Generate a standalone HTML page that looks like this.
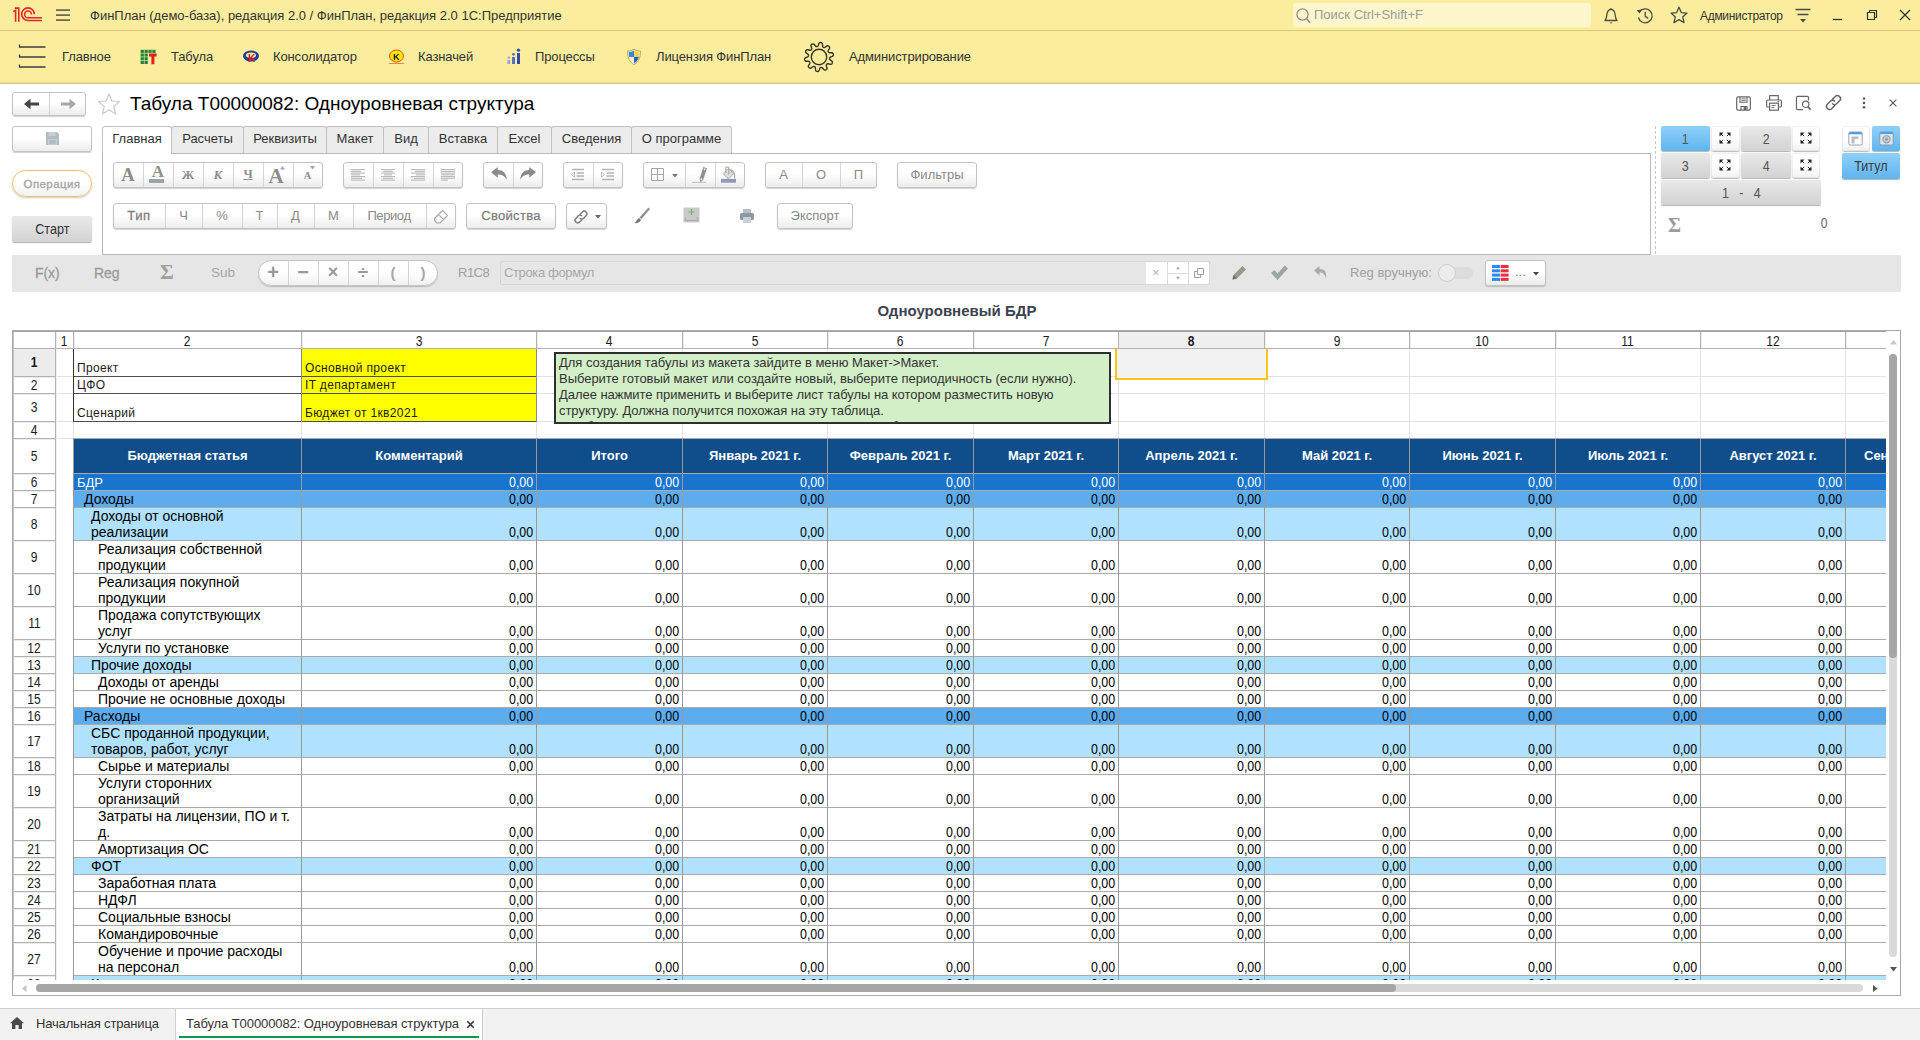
<!DOCTYPE html>
<html lang="ru"><head><meta charset="utf-8"><title>Табула T00000082: Одноуровневая структура</title>
<style>
*{box-sizing:border-box}
html,body{margin:0;padding:0}
body{width:1920px;height:1040px;overflow:hidden;background:#fff;font-family:"Liberation Sans",Arial,sans-serif;font-size:13px;color:#333;position:relative}
.abs{position:absolute}
#titlebar{left:0;top:0;width:1920px;height:31px;background:#fbed9e;border-bottom:1px solid #d9c97c}
#secbar{left:0;top:31px;width:1920px;height:53px;background:#fbed9e;border-bottom:1px solid #d6c98f;box-shadow:inset 0 -1px 0 #e9db8e}
.t{position:absolute;white-space:nowrap;line-height:16px}
.sec{font-size:13px;color:#333;top:49.4px;letter-spacing:-.12px}
.btn{position:absolute;border:1px solid #c3c3c3;border-radius:3px;background:linear-gradient(#fff,#fff 45%,#ececec);box-shadow:0 1px 1px rgba(0,0,0,.18)}
.gbtn{position:absolute;border-radius:2px;background:linear-gradient(#e9e9e9,#d2d2d2);box-shadow:0 1px 1px rgba(0,0,0,.3);text-align:center;color:#444}
.bbtn{position:absolute;border-radius:2px;background:linear-gradient(#8fd0fa,#5fb4f0);box-shadow:0 1px 1px rgba(0,0,0,.3);text-align:center;color:#333}
.sep{position:absolute;top:0;bottom:0;width:1px;background:#d4d4d4}
.lbl{position:absolute;top:0;height:100%;text-align:center;color:#8a8a8a;font-size:13px;line-height:24px}
.tab{position:absolute;top:126px;height:27px;border:1px solid #c0c0c0;border-bottom:none;background:#ececec;border-radius:3px 3px 0 0;font-size:13px;line-height:24px;text-align:center;color:#333}
.tab.act{background:#fff;height:28px;z-index:3}
/* grid */
#grid{left:12px;top:330px;width:1889px;height:666px;border:1px solid #a9a9a9;background:#fff;overflow:hidden}
.c{position:absolute;overflow:hidden;white-space:nowrap;font-size:13px;color:#000;line-height:15px}
.num{text-align:right;padding-right:3px}
.hd{position:absolute;text-align:center;font-size:13px;color:#000;line-height:16px}
.w{display:inline-block;transform-origin:0 0;transform:scaleX(1.0);font-size:14px;white-space:nowrap;line-height:16px;position:relative;top:-.4px}
.n{display:inline-block;transform-origin:100% 50%;transform:scaleX(.83);font-size:15px;line-height:16px;position:relative;top:-.3px}
.nc{display:inline-block;transform-origin:50% 50%;transform:scaleX(.83);font-size:14.5px;color:#1a1a1a;position:relative;top:-.4px}
</style></head>
<body>
<div id="titlebar" class="abs"></div>
<div id="secbar" class="abs"></div>
<!--TITLEBAR-->
<svg class="abs" style="left:10px;top:5px" width="34" height="20" viewBox="0 0 34 20"><g fill="none" stroke="#e3262c" stroke-width="1.6"><path d="M3.2 6.6 L5.6 5.4 V16.7 M4.8 3.1 H8.8 V16.7"/><path d="M31.9 15.5 H18 A6.3 6.3 0 1 1 24.3 9.2"/><path d="M31.9 12.8 H18 A3.4 3.4 0 1 1 21.4 9.4"/></g></svg>
<svg class="abs" style="left:55px;top:8px" width="16" height="14" viewBox="0 0 16 14"><g stroke="#70684f" stroke-width="1.7"><path d="M1 2.1H15M1 7.1H15M1 12.1H15"/></g></svg>
<div class="t" style="left:90px;top:8px;font-size:13px;color:#333">ФинПлан (демо-база), редакция 2.0 / ФинПлан, редакция 2.0 1С:Предприятие</div>
<div class="abs" style="left:1293px;top:3px;width:298px;height:24px;background:#fdf6cc;border-radius:3px"></div>
<svg class="abs" style="left:1295px;top:7px" width="18" height="18" viewBox="0 0 18 18"><circle cx="7.5" cy="7.5" r="5.6" fill="none" stroke="#8f8f8f" stroke-width="1.3"/><path d="M11.6 11.8 L15 15.6" stroke="#8f8f8f" stroke-width="1.6"/></svg>
<div class="t" style="left:1314px;top:7px;font-size:13px;color:#9b9b9b">Поиск Ctrl+Shift+F</div>
<svg class="abs" style="left:1602px;top:6px" width="18" height="20" viewBox="0 0 18 20"><path d="M3 14.5 C5 12.5 4.5 9 5.3 6.6 C6 4.4 7.5 3.4 9 3.4 C10.5 3.4 12 4.4 12.7 6.6 C13.5 9 13 12.5 15 14.5 Z" fill="none" stroke="#4a4a4a" stroke-width="1.3" stroke-linejoin="round"/><path d="M7.6 16.6 A1.5 1.5 0 0 0 10.4 16.6 Z" fill="#4a4a4a"/><path d="M9 3.4V2" stroke="#4a4a4a" stroke-width="1.3"/></svg>
<svg class="abs" style="left:1635px;top:5.5px" width="20" height="20" viewBox="0 0 20 20"><path d="M4.2 6.2 A7 7 0 1 1 3.4 11.5" fill="none" stroke="#4a4a4a" stroke-width="1.3"/><path d="M1.6 4.2 L4.6 7.4 L6.6 3.6 Z" fill="#4a4a4a"/><path d="M10.2 5.8 V10.4 L13.2 12.4" fill="none" stroke="#4a4a4a" stroke-width="1.3"/></svg>
<svg class="abs" style="left:1669px;top:5px" width="20" height="20" viewBox="0 0 20 20"><path d="M10 2.2 L12.3 7.6 L18 8.1 L13.7 11.9 L15 17.6 L10 14.6 L5 17.6 L6.3 11.9 L2 8.1 L7.7 7.6 Z" fill="none" stroke="#4a4a4a" stroke-width="1.3" stroke-linejoin="round"/></svg>
<div class="t" style="left:1700px;top:8px;font-size:12px;letter-spacing:-.3px;color:#333">Администратор</div>
<svg class="abs" style="left:1794px;top:7px" width="18" height="18" viewBox="0 0 18 18"><path d="M1.5 2.5H16.5M3.5 7.5H14.5" stroke="#4a4a4a" stroke-width="1.3"/><path d="M6 12 H12 L9 15.5 Z" fill="#4a4a4a"/></svg>
<svg class="abs" style="left:1832px;top:8px" width="12" height="14" viewBox="0 0 12 14"><path d="M1 11.5H10" stroke="#333" stroke-width="1.3"/></svg>
<svg class="abs" style="left:1865px;top:8px" width="14" height="14" viewBox="0 0 14 14"><path d="M2.5 4.5H9.5V11.5H2.5Z M4.5 4.5V2.5H11.5V9.5H9.5" fill="none" stroke="#333" stroke-width="1.2"/></svg>
<svg class="abs" style="left:1898px;top:8px" width="14" height="14" viewBox="0 0 14 14"><path d="M2 2L12 12M12 2L2 12" stroke="#333" stroke-width="1.3"/></svg>
<!--SECBAR-->
<div class="t sec" style="left:62px">Главное</div>
<div class="t sec" style="left:171px">Табула</div>
<div class="t sec" style="left:273px">Консолидатор</div>
<div class="t sec" style="left:418px">Казначей</div>
<div class="t sec" style="left:535px">Процессы</div>
<div class="t sec" style="left:656px">Лицензия ФинПлан</div>
<div class="t sec" style="left:849px">Администрирование</div>
<svg class="abs" style="left:17px;top:42px" width="30" height="28" viewBox="0 0 30 28"><g stroke="#3d3d3d" stroke-width="1.3" fill="none"><path d="M2.5 2.5V5H28.5M2.5 12.5V15H28.5M2.5 22.5V25H28.5"/></g></svg>
<svg class="abs" style="left:140px;top:49px" width="18" height="16" viewBox="0 0 18 16"><g fill="#23843f"><rect x="0.6" y="0.8" width="3.3" height="3.1"/><rect x="4.5" y="0.8" width="3.3" height="3.1"/><rect x="8.4" y="0.8" width="3.3" height="3.1"/><rect x="12.3" y="0.8" width="3.3" height="3.1"/><rect x="0.6" y="4.5" width="3.3" height="3.1"/><rect x="4.5" y="4.5" width="3.3" height="3.1"/><rect x="0.6" y="8.2" width="3.3" height="3.1"/><rect x="4.5" y="8.2" width="3.3" height="3.1"/><rect x="0.6" y="11.9" width="3.3" height="3.1"/><rect x="4.5" y="11.9" width="3.3" height="3.1"/></g><path d="M9 4.6H16.6V7.6H14.4V15.2H11.4V7.6H9Z" fill="#e3201b"/></svg>
<svg class="abs" style="left:242px;top:49px" width="18" height="16" viewBox="0 0 18 16"><ellipse cx="9" cy="7" rx="8" ry="5.5" fill="#1f3f9c"/><ellipse cx="9" cy="6.2" rx="5" ry="2.6" fill="#fbed9e"/><text x="6" y="13" font-family="Liberation Sans,sans-serif" font-weight="bold" font-size="10" fill="#e3201b">K</text></svg>
<svg class="abs" style="left:388px;top:49px" width="17" height="16" viewBox="0 0 17 16"><ellipse cx="8.5" cy="7" rx="7" ry="6" fill="#ffe600" stroke="#e84a1a" stroke-width="1"/><text x="5" y="10.5" font-family="Liberation Sans,sans-serif" font-weight="bold" font-size="9" fill="#222">K</text><path d="M1 14.5H16" stroke="#e88a3a" stroke-width="1"/></svg>
<svg class="abs" style="left:506px;top:48px" width="16" height="18" viewBox="0 0 16 18"><g fill="#2b4fa8"><rect x="11" y="5" width="3" height="11"/><circle cx="12.5" cy="2.2" r="1.6"/><rect x="6" y="9" width="3" height="7" fill="#5572c0"/><circle cx="7.5" cy="6.3" r="1.4" fill="#5572c0"/><rect x="1.5" y="12" width="2.6" height="4" fill="#8ea2dc"/><circle cx="2.8" cy="9.6" r="1.2" fill="#8ea2dc"/></g></svg>
<svg class="abs" style="left:626px;top:48px" width="16" height="18" viewBox="0 0 16 18"><path d="M8 1.2 C5.8 2.6 3.6 3 1.6 3 C1.4 9 3 13.8 8 16.6 C13 13.8 14.6 9 14.4 3 C12.4 3 10.2 2.6 8 1.2Z" fill="#f3f0dc" stroke="#c9a63a" stroke-width="1"/><path d="M8 2.4 C6.2 3.4 4.4 3.9 2.7 4 C2.7 5.8 2.8 7.4 3.2 9 H8Z" fill="#3d86dd"/><path d="M8 9 H12.8 C12 11.8 10.6 13.8 8 15.4Z" fill="#2b5fc4"/><path d="M8 2.4 C9.8 3.4 11.6 3.9 13.3 4 C13.3 5.8 13.2 7.4 12.8 9 H8Z" fill="#f3d35a"/></svg>
<svg class="abs" style="left:802px;top:40px" width="34" height="34" viewBox="0 0 34 34"><path d="M17.00 3.36 L17.37 2.85 L17.75 2.63 L18.14 2.55 L18.52 2.54 L18.90 2.58 L19.27 2.65 L19.64 2.77 L19.98 2.99 L20.27 3.40 L20.45 4.12 L20.52 5.10 L20.57 6.01 L20.69 6.59 L20.87 6.91 L21.09 7.11 L21.34 7.26 L21.59 7.39 L21.84 7.49 L22.12 7.57 L22.44 7.58 L22.86 7.44 L23.46 7.05 L24.25 6.46 L25.02 5.96 L25.61 5.77 L26.06 5.81 L26.42 5.97 L26.73 6.19 L27.02 6.45 L27.27 6.73 L27.49 7.04 L27.64 7.42 L27.64 7.92 L27.36 8.61 L26.84 9.45 L26.35 10.21 L26.11 10.74 L26.06 11.11 L26.12 11.41 L26.23 11.67 L26.36 11.92 L26.51 12.16 L26.69 12.38 L26.94 12.57 L27.36 12.71 L28.08 12.75 L29.06 12.73 L29.97 12.78 L30.57 12.98 L30.90 13.27 L31.10 13.62 L31.22 13.98 L31.31 14.35 L31.35 14.73 L31.34 15.11 L31.24 15.50 L30.94 15.90 L30.32 16.30 L29.40 16.68 L28.56 17.00 L28.04 17.29 L27.79 17.57 L27.67 17.84 L27.60 18.11 L27.56 18.39 L27.54 18.67 L27.55 18.96 L27.64 19.26 L27.90 19.62 L28.46 20.07 L29.27 20.63 L29.97 21.22 L30.34 21.72 L30.44 22.16 L30.40 22.55 L30.28 22.91 L30.13 23.26 L29.95 23.60 L29.71 23.90 L29.40 24.16 L28.93 24.31 L28.19 24.26 L27.22 24.03 L26.35 23.79 L25.77 23.73 L25.40 23.80 L25.14 23.95 L24.92 24.13 L24.73 24.33 L24.55 24.55 L24.39 24.78 L24.28 25.09 L24.28 25.53 L24.47 26.22 L24.79 27.15 L25.02 28.04 L25.02 28.66 L24.84 29.07 L24.58 29.36 L24.27 29.59 L23.94 29.79 L23.60 29.95 L23.23 30.06 L22.82 30.08 L22.35 29.92 L21.78 29.45 L21.14 28.69 L20.57 27.99 L20.14 27.59 L19.80 27.44 L19.50 27.40 L19.22 27.43 L18.94 27.47 L18.67 27.54 L18.40 27.64 L18.14 27.82 L17.88 28.18 L17.62 28.85 L17.33 29.79 L17.00 30.64 L16.63 31.15 L16.25 31.37 L15.86 31.45 L15.48 31.46 L15.10 31.42 L14.73 31.35 L14.36 31.23 L14.02 31.01 L13.73 30.60 L13.55 29.88 L13.48 28.90 L13.43 27.99 L13.31 27.41 L13.13 27.09 L12.91 26.89 L12.66 26.74 L12.41 26.61 L12.16 26.51 L11.88 26.43 L11.56 26.42 L11.14 26.56 L10.54 26.95 L9.75 27.54 L8.98 28.04 L8.39 28.23 L7.94 28.19 L7.58 28.03 L7.27 27.81 L6.98 27.55 L6.73 27.27 L6.51 26.96 L6.36 26.58 L6.36 26.08 L6.64 25.39 L7.16 24.55 L7.65 23.79 L7.89 23.26 L7.94 22.89 L7.88 22.59 L7.77 22.33 L7.64 22.08 L7.49 21.84 L7.31 21.62 L7.06 21.43 L6.64 21.29 L5.92 21.25 L4.94 21.27 L4.03 21.22 L3.43 21.02 L3.10 20.73 L2.90 20.38 L2.78 20.02 L2.69 19.65 L2.65 19.27 L2.66 18.89 L2.76 18.50 L3.06 18.10 L3.68 17.70 L4.60 17.32 L5.44 17.00 L5.96 16.71 L6.21 16.43 L6.33 16.16 L6.40 15.89 L6.44 15.61 L6.46 15.33 L6.45 15.04 L6.36 14.74 L6.10 14.38 L5.54 13.93 L4.73 13.37 L4.03 12.78 L3.66 12.28 L3.56 11.84 L3.60 11.45 L3.72 11.09 L3.87 10.74 L4.05 10.40 L4.29 10.10 L4.60 9.84 L5.07 9.69 L5.81 9.74 L6.78 9.97 L7.65 10.21 L8.23 10.27 L8.60 10.20 L8.86 10.05 L9.08 9.87 L9.27 9.67 L9.45 9.45 L9.61 9.22 L9.72 8.91 L9.72 8.47 L9.53 7.78 L9.21 6.85 L8.98 5.96 L8.98 5.34 L9.16 4.93 L9.42 4.64 L9.73 4.41 L10.06 4.21 L10.40 4.05 L10.77 3.94 L11.18 3.92 L11.65 4.08 L12.22 4.55 L12.86 5.31 L13.43 6.01 L13.86 6.41 L14.20 6.56 L14.50 6.60 L14.78 6.57 L15.06 6.53 L15.33 6.46 L15.60 6.36 L15.86 6.18 L16.12 5.82 L16.38 5.15 L16.67 4.21Z" fill="none" stroke="#38352a" stroke-width="1.4" stroke-linejoin="round"/><circle cx="17" cy="17" r="7.7" fill="none" stroke="#38352a" stroke-width="1.4"/></svg>
<!--FORMHEAD-->
<div class="btn" style="left:12px;top:92px;width:74px;height:24px"><div class="sep" style="left:36px"></div><svg class="abs" style="left:10px;top:5px" width="18" height="12" viewBox="0 0 18 12"><path d="M1 6 L7.5 0.8 V4.6 H16 V7.4 H7.5 V11.2 Z" fill="#444"/></svg><svg class="abs" style="left:46px;top:5px" width="18" height="12" viewBox="0 0 18 12"><path d="M17 6 L10.5 0.8 V4.6 H2 V7.4 H10.5 V11.2 Z" fill="#a8a8a8"/></svg></div>
<svg class="abs" style="left:96px;top:92px" width="26" height="24" viewBox="0 0 26 24"><path d="M13 1.8 L15.9 9 L23.6 9.5 L17.7 14.4 L19.6 21.9 L13 17.8 L6.4 21.9 L8.3 14.4 L2.4 9.5 L10.1 9 Z" fill="#fff" stroke="#c9c9c9" stroke-width="1.2" stroke-linejoin="round"/></svg>
<div class="t" style="left:130px;top:93px;font-size:19px;line-height:22px;color:#000">Табула T00000082: Одноуровневая структура</div>
<svg class="abs" style="left:1735px;top:95px" width="17" height="17" viewBox="0 0 17 17"><rect x="1.7" y="1.9" width="13.6" height="13.2" rx="1.6" fill="none" stroke="#666" stroke-width="1.2"/><path d="M5 2V7.3H12V2" fill="none" stroke="#666" stroke-width="1.1"/><path d="M6.4 3.9H10.6M6.4 5.6H10.6" stroke="#666" stroke-width=".9"/><path d="M6 15V11.5H12V15" fill="none" stroke="#666" stroke-width="1.1"/><rect x="8.6" y="12" width="2.8" height="3" fill="#666"/></svg>
<svg class="abs" style="left:1765px;top:94px" width="18" height="18" viewBox="0 0 18 18"><path d="M4.7 6V1.7H13.3V6" fill="none" stroke="#666" stroke-width="1.2"/><path d="M4.5 13H2.7Q1.6 13 1.6 11.9V7.2Q1.6 6 2.7 6H15.3Q16.4 6 16.4 7.2V11.9Q16.4 13 15.3 13H13.5" fill="none" stroke="#666" stroke-width="1.2"/><rect x="4.6" y="9.2" width="8.8" height="7" fill="#fff" stroke="#666" stroke-width="1.2"/><path d="M6.4 11.6H10.6M6.4 13.6H9.4" stroke="#666" stroke-width=".9"/><path d="M12.4 7.7H14.4" stroke="#666" stroke-width=".9"/></svg>
<svg class="abs" style="left:1795px;top:95px" width="17" height="16" viewBox="0 0 17 16"><path d="M13.5 5.5V2.5Q13.5 1.3 12.3 1.3H2.7Q1.5 1.3 1.5 2.5V13.5Q1.5 14.7 2.7 14.7H8" fill="none" stroke="#666" stroke-width="1.2"/><circle cx="10.7" cy="9.3" r="3.2" fill="none" stroke="#666" stroke-width="1.2"/><path d="M13 11.8 L15.6 14.6" stroke="#666" stroke-width="1.7"/></svg>
<svg class="abs" style="left:1824px;top:93px" width="19" height="19" viewBox="0 0 17 16"><g fill="none" stroke="#666" stroke-width="1.3" stroke-linecap="round"><path d="M7.5 5.2 L10 2.7 A2.6 2.6 0 0 1 14 6.5 L11.3 9.2 A2.6 2.6 0 0 1 7.6 9.2"/><path d="M9.5 10.8 L7 13.3 A2.6 2.6 0 0 1 3 9.5 L5.7 6.8 A2.6 2.6 0 0 1 9.4 6.8"/></g></svg>
<svg class="abs" style="left:1860.5px;top:96.3px" width="6" height="14" viewBox="0 0 6 14"><g fill="#555"><circle cx="3" cy="2.6" r="1.25"/><circle cx="3" cy="7" r="1.25"/><circle cx="3" cy="11.3" r="1.25"/></g></svg>
<svg class="abs" style="left:1888.4px;top:98.3px" width="10" height="10" viewBox="0 0 10 10"><path d="M1.6 1.6L8.4 8.4M8.4 1.6L1.6 8.4" stroke="#555" stroke-width="1.1"/></svg>
<div class="btn" style="left:12px;top:126px;width:80px;height:26px"><svg class="abs" style="left:32px;top:4px" width="15" height="15" viewBox="0 0 15 15"><path d="M1 1H12L14 3V14H1Z" fill="#b3bcc3"/><rect x="3.5" y="1" width="7" height="4" fill="#c9d0d5"/><rect x="3" y="8" width="9" height="6" fill="#c4ccd2"/><path d="M4.5 10H10.5M4.5 12H10.5" stroke="#a0a9b0" stroke-width="1"/></svg></div>
<div class="abs" style="left:12px;top:170px;width:80px;height:27px;border:1px solid #f1c26a;border-radius:14px;background:linear-gradient(#fff,#fff 50%,#f1f1f1);box-shadow:0 1px 2px rgba(0,0,0,.22);text-align:center;font-size:11.5px;letter-spacing:.4px;line-height:26px;color:#a3a3a3;-webkit-text-stroke:.3px #a3a3a3">Операция</div>
<div class="gbtn" style="left:12px;top:216px;width:80px;height:26px;line-height:26px;color:#333"><span class="nc" style="font-size:15px;transform:scaleX(.84);color:#333">Старт</span></div>
<div class="abs" style="left:102px;top:153px;width:1549px;height:102px;border:1px solid #b9b9b9;background:#fff"></div>
<div class="tab act" style="left:102px;width:70px">Главная</div>
<div class="tab" style="left:171px;width:73px">Расчеты</div>
<div class="tab" style="left:243px;width:84px">Реквизиты</div>
<div class="tab" style="left:326px;width:58px">Макет</div>
<div class="tab" style="left:383px;width:46px">Вид</div>
<div class="tab" style="left:428px;width:70px">Вставка</div>
<div class="tab" style="left:497px;width:55px">Excel</div>
<div class="tab" style="left:551px;width:81px">Сведения</div>
<div class="tab" style="left:631px;width:101px">О программе</div>
<div class="btn" style="left:113px;top:162px;width:210px;height:26px"><div class="sep" style="left:29px"></div><div class="sep" style="left:59px"></div><div class="sep" style="left:89px"></div><div class="sep" style="left:119px"></div><div class="sep" style="left:149px"></div><div class="sep" style="left:179px"></div><div class="lbl" style="left:-1px;width:30px;font-family:'Liberation Serif',serif;font-weight:bold;color:#8c8c8c;font-size:18.5px;line-height:25px">A</div><div class="lbl" style="left:29px;width:30px;font-family:'Liberation Serif',serif;font-weight:bold;color:#8c8c8c;font-size:17px;line-height:18px">A</div><div class="abs" style="left:35px;top:16px;width:15px;height:3.5px;background:#9aa4ad"></div><div class="lbl" style="left:59px;width:30px;font-family:'Liberation Serif',serif;font-weight:bold;color:#8c8c8c;font-size:12.5px;line-height:24px;text-transform:uppercase">ж</div><div class="lbl" style="left:89px;width:30px;font-family:'Liberation Serif',serif;font-weight:bold;color:#8c8c8c;font-style:italic;font-size:13px;line-height:24px;text-transform:uppercase">к</div><div class="lbl" style="left:119px;width:30px;font-family:'Liberation Serif',serif;font-weight:bold;color:#8c8c8c;font-size:12.5px;line-height:23px;text-transform:uppercase;text-decoration:underline">ч</div><div class="lbl" style="left:147px;width:30px;font-family:'Liberation Serif',serif;font-weight:bold;color:#8c8c8c;font-size:21px;line-height:27px">A</div><svg class="abs" style="left:166px;top:3px" width="5" height="4"><path d="M0 3.5L2.5 0L5 3.5Z" fill="#a3a3b0"/></svg><div class="lbl" style="left:179px;width:29px;font-family:'Liberation Serif',serif;font-weight:bold;color:#8c8c8c;font-size:10.5px;line-height:26px">A</div><svg class="abs" style="left:196px;top:3px" width="5" height="4"><path d="M0 0H5L2.5 3.5Z" fill="#a3a3b0"/></svg></div>
<div class="btn" style="left:343px;top:162px;width:120px;height:26px"><div class="sep" style="left:29px"></div><div class="sep" style="left:59px"></div><div class="sep" style="left:89px"></div><svg class="abs" style="left:6px;top:5px" width="16" height="14" viewBox="0 0 16 14"><g stroke="#b4babf" stroke-width="1.1"><path d="M1.0 1.6H15.0"/><path d="M1.0 3.4H11.0"/><path d="M1.0 5.1H15.0"/><path d="M1.0 6.8H10.0"/><path d="M1.0 8.6H15.0"/><path d="M1.0 10.3H12.0"/><path d="M1.0 12.1H15.0"/></g></svg><svg class="abs" style="left:36px;top:5px" width="16" height="14" viewBox="0 0 16 14"><g stroke="#b4babf" stroke-width="1.1"><path d="M1.0 1.6H15.0"/><path d="M3.0 3.4H13.0"/><path d="M1.0 5.1H15.0"/><path d="M4.0 6.8H12.0"/><path d="M1.0 8.6H15.0"/><path d="M3.0 10.3H13.0"/><path d="M1.0 12.1H15.0"/></g></svg><svg class="abs" style="left:66px;top:5px" width="16" height="14" viewBox="0 0 16 14"><g stroke="#b4babf" stroke-width="1.1"><path d="M1.0 1.6H15.0"/><path d="M5.0 3.4H15.0"/><path d="M1.0 5.1H15.0"/><path d="M6.0 6.8H15.0"/><path d="M1.0 8.6H15.0"/><path d="M4.0 10.3H15.0"/><path d="M1.0 12.1H15.0"/></g></svg><svg class="abs" style="left:96px;top:5px" width="16" height="14" viewBox="0 0 16 14"><g stroke="#b4babf" stroke-width="1.1"><path d="M1.0 1.6H15.0"/><path d="M1.0 3.4H15.0"/><path d="M1.0 5.1H15.0"/><path d="M1.0 6.8H15.0"/><path d="M1.0 8.6H15.0"/><path d="M1.0 10.3H15.0"/><path d="M1.0 12.1H8.0"/></g></svg></div>
<div class="btn" style="left:483px;top:162px;width:60px;height:26px"><div class="sep" style="left:29px"></div><svg class="abs" style="left:6px;top:3px" width="18" height="15" viewBox="0 0 20 17"><path d="M1 7 L8.5 1 V4.6 C14.5 4.6 18.5 8.2 18.8 15.5 C16.6 11.4 13.6 9.6 8.5 9.6 V13.2 Z" fill="#8a8a8a"/></svg><svg class="abs" style="left:35px;top:3px" width="18" height="15" viewBox="0 0 20 17"><path d="M19 7 L11.5 1 V4.6 C5.5 4.6 1.5 8.2 1.2 15.5 C3.4 11.4 6.4 9.6 11.5 9.6 V13.2 Z" fill="#8a8a8a"/></svg></div>
<div class="btn" style="left:563px;top:162px;width:60px;height:26px"><div class="sep" style="left:29px"></div><svg class="abs" style="left:6px;top:5px" width="16" height="14" viewBox="0 0 16 14"><g stroke="#aeb3b7" stroke-width="1.3"><path d="M2 1.5H14M6.5 5H14M6.5 8H14M2 11.5H14"/></g><path d="M1.5 6.5L4.5 4V9Z" fill="none" stroke="#aeb3b7" stroke-width=".9"/></svg><svg class="abs" style="left:36px;top:5px" width="16" height="14" viewBox="0 0 16 14"><g stroke="#aeb3b7" stroke-width="1.3"><path d="M2 1.5H14M6.5 5H14M6.5 8H14M2 11.5H14"/></g><path d="M4.5 6.5L1.5 4V9Z" fill="none" stroke="#aeb3b7" stroke-width=".9"/></svg></div>
<div class="btn" style="left:643px;top:162px;width:102px;height:26px"><div class="sep" style="left:41px"></div><div class="sep" style="left:71px"></div><svg class="abs" style="left:6px;top:4px" width="15" height="15" viewBox="0 0 15 15"><path d="M1.5 1.5H13.5V13.5H1.5ZM7.5 1.5V13.5M1.5 7.5H13.5" fill="none" stroke="#a6a6a6" stroke-width="1"/></svg><svg class="abs" style="left:28px;top:11px" width="7" height="4"><path d="M0 0H6L3 3.5Z" fill="#777"/></svg><svg class="abs" style="left:48px;top:3px" width="16" height="18" viewBox="0 0 16 18"><path d="M11.3 1 L15 2.2 L11.1 14 L8.3 16.2 L7.6 12.9 Z" fill="#8a9094"/><circle cx="12.6" cy="3.2" r="1" fill="#e8e8e8"/><circle cx="9.4" cy="13.2" r="1" fill="#e8e8e8"/><path d="M0 16.4H14" stroke="#c2c2c2" stroke-width="1.1"/></svg><svg class="abs" style="left:77px;top:3px" width="16" height="18" viewBox="0 0 16 18"><path d="M7.4 2.4 L12.7 7.7 L7.4 13 L2.1 7.7 Z" fill="#dcdcdc" stroke="#ababab" stroke-width="1"/><path d="M4.8 7 V1.2 H7.8 V8.2" fill="none" stroke="#9aa890" stroke-width="1"/><path d="M9.5 3.6 C12.4 4.4 14.2 6.4 13.6 12.6" fill="none" stroke="#a8ad95" stroke-width="1.1"/><rect x="0" y="12.9" width="15" height="3.8" fill="#8f9ab8"/></svg></div>
<div class="btn" style="left:765px;top:162px;width:112px;height:26px"><div class="sep" style="left:36px"></div><div class="sep" style="left:74px"></div><div class="lbl" style="left:-1px;width:37px;">A</div><div class="lbl" style="left:36px;width:38px;">О</div><div class="lbl" style="left:74px;width:37px;">П</div></div>
<div class="btn" style="left:897px;top:162px;width:80px;height:26px"><div class="lbl" style="left:-1px;width:80px;">Фильтры</div></div>
<div class="btn" style="left:113px;top:203px;width:343px;height:26px"><div class="sep" style="left:51px"></div><div class="sep" style="left:88px"></div><div class="sep" style="left:128px"></div><div class="sep" style="left:163px"></div><div class="sep" style="left:200px"></div><div class="sep" style="left:239px"></div><div class="sep" style="left:312px"></div><div class="lbl" style="left:-1px;width:52px;color:#7d7d7d;-webkit-text-stroke:.3px #7d7d7d;letter-spacing:.6px">Тип</div><div class="lbl" style="left:51px;width:37px;">Ч</div><div class="lbl" style="left:88px;width:40px;">%</div><div class="lbl" style="left:128px;width:35px;">Т</div><div class="lbl" style="left:163px;width:37px;">Д</div><div class="lbl" style="left:200px;width:39px;">М</div><div class="lbl" style="left:239px;width:72px;letter-spacing:-.4px">Период</div><svg class="abs" style="left:318px;top:4px" width="18" height="18" viewBox="0 0 18 18"><path d="M10.5 2.5 L15.5 7.5 L8 15 L5 15 L2.5 12.5 L2.5 10.5 Z M6.5 6.5 L11.5 11.5" fill="none" stroke="#a8a8a8" stroke-width="1.1" stroke-linejoin="round"/></svg></div>
<div class="btn" style="left:466px;top:203px;width:90px;height:26px"><div class="lbl" style="left:-1px;width:90px;color:#7d7d7d;-webkit-text-stroke:.25px #7d7d7d;letter-spacing:.3px">Свойства</div></div>
<div class="btn" style="left:566px;top:203px;width:41px;height:26px"><svg class="abs" style="left:6px;top:5px" width="16" height="16" viewBox="0 0 17 16"><g fill="none" stroke="#7a7a7a" stroke-width="1.5" stroke-linecap="round"><path d="M7.5 5.2 L10 2.7 A2.6 2.6 0 0 1 14 6.5 L11.3 9.2 A2.6 2.6 0 0 1 7.6 9.2"/><path d="M9.5 10.8 L7 13.3 A2.6 2.6 0 0 1 3 9.5 L5.7 6.8 A2.6 2.6 0 0 1 9.4 6.8"/></g></svg><svg class="abs" style="left:28px;top:11px" width="7" height="4"><path d="M0 0H6L3 3.5Z" fill="#666"/></svg></div>
<svg class="abs" style="left:633px;top:206px" width="18" height="20" viewBox="0 0 18 20"><path d="M15.5 1.5 L17 3 L8.5 13 L6.5 11.5 Z" fill="#8f8f8f"/><path d="M6 12 L8 13.8 C7 16.5 4 17.6 1.5 17 C3.5 15.8 3.6 13.4 6 12Z" fill="#777"/></svg>
<svg class="abs" style="left:683px;top:207px" width="17" height="17" viewBox="0 0 17 17"><rect x="0.5" y="0.5" width="16" height="15" fill="#c9c9c9"/><path d="M8.5 2V8M5.5 5H11.5" stroke="#7fae6f" stroke-width="1.2"/><path d="M2.5 10.5V13.5H14.5V10.5" fill="none" stroke="#a9a9a9" stroke-width="1.2"/></svg>
<svg class="abs" style="left:739px;top:208px" width="16" height="16" viewBox="0 0 16 16"><rect x="4" y="1" width="8" height="5" fill="#b8c0c7"/><rect x="1" y="5" width="14" height="7" rx="1.5" fill="#8b98a3"/><rect x="4" y="9" width="8" height="6" fill="#c9d0d6"/></svg>
<div class="btn" style="left:777px;top:203px;width:76px;height:26px"><div class="lbl" style="left:-1px;width:76px;">Экспорт</div></div>
<div class="abs" style="left:1655px;top:126px;width:0;height:128px;border-left:1px dashed #c9c9c9"></div>
<div class="bbtn" style="left:1661px;top:126px;width:49px;height:25px;line-height:25px;color:#555"><span class="nc" style="font-size:15px;color:#555">1</span></div>
<div class="abs" style="left:1711px;top:126px;width:29px;height:25px;background:linear-gradient(#fff,#fff 50%,#f1f1f1);border-radius:3px;box-shadow:0 1px 1px rgba(0,0,0,.28),0 0 0 1px rgba(0,0,0,.06) inset"><svg class="abs" style="left:8px;top:6px" width="12" height="12" viewBox="0 0 12 12"><g fill="#222"><path d="M0.5 0.5H4.5L0.5 4.5Z M11.5 0.5V4.5L7.5 0.5Z M0.5 11.5V7.5L4.5 11.5Z M11.5 11.5H7.5L11.5 7.5Z"/></g><g stroke="#222" stroke-width="1"><path d="M1.5 1.5L4.2 4.2M10.5 1.5L7.8 4.2M1.5 10.5L4.2 7.8M10.5 10.5L7.8 7.8"/></g></svg></div>
<div class="gbtn" style="left:1741px;top:126px;width:50px;height:25px;line-height:25px;color:#555"><span class="nc" style="font-size:15px;color:#555">2</span></div>
<div class="abs" style="left:1792px;top:126px;width:28px;height:25px;background:linear-gradient(#fff,#fff 50%,#f1f1f1);border-radius:3px;box-shadow:0 1px 1px rgba(0,0,0,.28),0 0 0 1px rgba(0,0,0,.06) inset"><svg class="abs" style="left:8px;top:6px" width="12" height="12" viewBox="0 0 12 12"><g fill="#222"><path d="M0.5 0.5H4.5L0.5 4.5Z M11.5 0.5V4.5L7.5 0.5Z M0.5 11.5V7.5L4.5 11.5Z M11.5 11.5H7.5L11.5 7.5Z"/></g><g stroke="#222" stroke-width="1"><path d="M1.5 1.5L4.2 4.2M10.5 1.5L7.8 4.2M1.5 10.5L4.2 7.8M10.5 10.5L7.8 7.8"/></g></svg></div>
<div class="gbtn" style="left:1661px;top:153px;width:49px;height:25px;line-height:25px;color:#555"><span class="nc" style="font-size:15px;color:#555">3</span></div>
<div class="abs" style="left:1711px;top:153px;width:29px;height:25px;background:linear-gradient(#fff,#fff 50%,#f1f1f1);border-radius:3px;box-shadow:0 1px 1px rgba(0,0,0,.28),0 0 0 1px rgba(0,0,0,.06) inset"><svg class="abs" style="left:8px;top:6px" width="12" height="12" viewBox="0 0 12 12"><g fill="#222"><path d="M0.5 0.5H4.5L0.5 4.5Z M11.5 0.5V4.5L7.5 0.5Z M0.5 11.5V7.5L4.5 11.5Z M11.5 11.5H7.5L11.5 7.5Z"/></g><g stroke="#222" stroke-width="1"><path d="M1.5 1.5L4.2 4.2M10.5 1.5L7.8 4.2M1.5 10.5L4.2 7.8M10.5 10.5L7.8 7.8"/></g></svg></div>
<div class="gbtn" style="left:1741px;top:153px;width:50px;height:25px;line-height:25px;color:#555"><span class="nc" style="font-size:15px;color:#555">4</span></div>
<div class="abs" style="left:1792px;top:153px;width:28px;height:25px;background:linear-gradient(#fff,#fff 50%,#f1f1f1);border-radius:3px;box-shadow:0 1px 1px rgba(0,0,0,.28),0 0 0 1px rgba(0,0,0,.06) inset"><svg class="abs" style="left:8px;top:6px" width="12" height="12" viewBox="0 0 12 12"><g fill="#222"><path d="M0.5 0.5H4.5L0.5 4.5Z M11.5 0.5V4.5L7.5 0.5Z M0.5 11.5V7.5L4.5 11.5Z M11.5 11.5H7.5L11.5 7.5Z"/></g><g stroke="#222" stroke-width="1"><path d="M1.5 1.5L4.2 4.2M10.5 1.5L7.8 4.2M1.5 10.5L4.2 7.8M10.5 10.5L7.8 7.8"/></g></svg></div>
<div class="gbtn" style="left:1661px;top:180px;width:160px;height:25px;line-height:25px;color:#555"><span class="nc" style="font-size:15px;color:#555">1&nbsp;&nbsp; -&nbsp;&nbsp; 4</span></div>
<div class="t" style="left:1668px;top:213px;font-family:'Liberation Serif',serif;font-size:20px;font-weight:bold;line-height:24px;color:#9a9a9a">Σ</div>
<div class="t" style="left:1820px;top:215px;color:#666"><span class="nc" style="font-size:14.5px;color:#666">0</span></div>
<div class="abs" style="left:1842px;top:126px;width:28px;height:25px;background:linear-gradient(#fff,#fff 50%,#f1f1f1);border-radius:3px;box-shadow:0 1px 1px rgba(0,0,0,.28),0 0 0 1px rgba(0,0,0,.06) inset"><svg class="abs" style="left:6px;top:5px" width="15" height="15" viewBox="0 0 15 15"><rect x="0.8" y="1" width="13.4" height="13" rx="1.5" fill="#fdfdfd" stroke="#9aa3ab" stroke-width="1"/><path d="M0.8 3.2 V2.5 Q0.8 1 2.3 1 H12.7 Q14.2 1 14.2 2.5 V3.2Z" fill="#4c9ff0"/><path d="M3.5 5.5H10.5V8H6.5V12.5H3.5Z" fill="#b9bec3"/></svg></div>
<div class="bbtn" style="left:1872px;top:126px;width:28px;height:25px"><svg class="abs" style="left:7px;top:5px" width="15" height="15" viewBox="0 0 15 15"><rect x="0.8" y="1" width="13.4" height="13" rx="1.5" fill="#dbe4ea" stroke="#8e9aa5" stroke-width="1"/><path d="M0.8 3 V2.5 Q0.8 1 2.3 1 H12.7 Q14.2 1 14.2 2.5 V3Z" fill="#4c9ff0"/><circle cx="7.5" cy="8.3" r="3.6" fill="#c3ccd3" stroke="#97a3ad" stroke-width="1.1"/><circle cx="7.5" cy="8.3" r="1.3" fill="#8d99a4"/></svg></div>
<div class="bbtn" style="left:1842px;top:153px;width:58px;height:26px;line-height:26px"><span class="nc" style="font-size:15px;transform:scaleX(.84);color:#3c3c3c">Титул</span></div>
<div class="abs" style="left:12px;top:255px;width:1889px;height:37px;background:#e6e6e6"></div>
<div class="t" style="left:35px;top:265px;color:#9a9a9a;font-size:14px;letter-spacing:-.1px;-webkit-text-stroke:.3px #9a9a9a">F(x)</div>
<div class="t" style="left:94px;top:265px;color:#9a9a9a;font-size:14px;letter-spacing:-.1px;-webkit-text-stroke:.3px #9a9a9a">Reg</div>
<div class="t" style="left:160px;top:260px;font-family:'Liberation Serif',serif;font-weight:bold;font-size:21px;line-height:24px;color:#a0a0a0">Σ</div>
<div class="t" style="left:211px;top:265px;color:#a5a5a5;font-size:13.5px">Sub</div>
<div class="abs" style="left:258px;top:260px;width:180px;height:26px;border:1px solid #c6c6c6;border-radius:13px;background:linear-gradient(#fff,#fff 50%,#f0f0f0);box-shadow:0 1px 1px rgba(0,0,0,.2)"><div class="sep" style="left:29px"></div><div class="sep" style="left:59px"></div><div class="sep" style="left:89px"></div><div class="sep" style="left:119px"></div><div class="sep" style="left:149px"></div><div class="lbl" style="left:-1px;width:30px;font-size:20px;line-height:23px;color:#999;font-weight:bold;">+</div><div class="lbl" style="left:29px;width:30px;font-size:20px;line-height:23px;color:#999;font-weight:bold;">−</div><div class="lbl" style="left:59px;width:30px;font-size:18px;line-height:23px;color:#999;font-weight:bold;">×</div><div class="lbl" style="left:89px;width:30px;font-size:19px;line-height:23px;color:#999;font-weight:bold;">÷</div><div class="lbl" style="left:119px;width:30px;font-size:15px;line-height:23px;color:#999;font-weight:bold;color:#a6a6a6;">(</div><div class="lbl" style="left:149px;width:30px;font-size:15px;line-height:23px;color:#999;font-weight:bold;color:#a6a6a6;">)</div></div>
<div class="t" style="left:458px;top:265px;font-size:13px;color:#a0a0a0;letter-spacing:-.5px">R1C8</div>
<div class="abs" style="left:500px;top:261px;width:710px;height:24px;border:1px solid #d6d6d6;border-radius:2px;background:#e6e6e6"></div>
<div class="t" style="left:504px;top:265px;font-size:13px;letter-spacing:-.36px;color:#a8a8a8">Строка формул</div>
<div class="abs" style="left:1146px;top:262px;width:63px;height:22px;background:#fff;border-radius:0 2px 2px 0"></div>
<div class="abs" style="left:1167px;top:262px;width:1px;height:22px;background:#dcdcdc"></div><div class="abs" style="left:1188px;top:262px;width:1px;height:22px;background:#dcdcdc"></div><div class="abs" style="left:1168px;top:273px;width:20px;height:1px;background:#dcdcdc"></div>
<div class="t" style="left:1152px;top:265px;font-size:13px;color:#b4b4b4">×</div>
<svg class="abs" style="left:1175px;top:265px" width="6" height="16" viewBox="0 0 6 16"><path d="M1 4.2L3 1.6L5 4.2Z M1 11.8L3 14.4L5 11.8Z" fill="#a8a8a8"/></svg>
<svg class="abs" style="left:1194px;top:268px" width="10" height="10" viewBox="0 0 10 10"><path d="M3.5 0.5H9.5V6.5H3.5Z M0.5 3.5H3.5 M6.5 6.5V9.5H0.5V3.5" fill="none" stroke="#a0a0a0" stroke-width="1"/></svg>
<svg class="abs" style="left:1231px;top:264px" width="17" height="17" viewBox="0 0 17 17"><path d="M11.5 2 L15 5.5 L6 14.5 L1.5 15.5 L2.5 11 Z" fill="#9a9a8a"/><path d="M1.5 15.5 L2.5 11 L6 14.5Z" fill="#6f6f6f"/></svg>
<svg class="abs" style="left:1270px;top:264px" width="19" height="17" viewBox="0 0 19 17"><path d="M1 9 L4.5 6 L7.5 9.6 L14.8 1.6 L18 4.6 L7.5 16 Z" fill="#9aa79a"/></svg>
<svg class="abs" style="left:1313px;top:265px" width="16" height="16" viewBox="0 0 16 16"><path d="M1 5.5 L6.5 1 V4 C11.5 4 14 7 13 13.5 C12 10 10.5 7.5 6.5 7.5 V10.5 Z" fill="#a9aab2"/></svg>
<div class="t" style="left:1350px;top:265px;font-size:13px;color:#a0a0a0">Reg вручную:</div>
<div class="abs" style="left:1443px;top:267px;width:30px;height:12px;border-radius:6px;background:#dcdcdc"></div><div class="abs" style="left:1438px;top:264px;width:18px;height:18px;border-radius:9px;background:#ececec;border:1px solid #cdcdcd"></div>
<div class="btn" style="left:1485px;top:260px;width:61px;height:26px"><svg class="abs" style="left:6px;top:4px" width="17" height="16" viewBox="0 0 17 16"><g fill="#2a8af0"><rect x="0" y="0" width="8" height="3"/><rect x="0" y="4.3" width="8" height="3"/><rect x="0" y="8.6" width="8" height="3"/><rect x="0" y="12.9" width="8" height="3"/></g><g fill="#e8323c"><rect x="8.6" y="0" width="8" height="3"/><rect x="8.6" y="4.3" width="8" height="3"/><rect x="8.6" y="8.6" width="8" height="3"/><rect x="8.6" y="12.9" width="8" height="3"/></g></svg><div class="abs" style="left:29px;top:3px;font-size:13px;color:#8a8a8a;line-height:16px">...</div><svg class="abs" style="left:47px;top:11px" width="7" height="4"><path d="M0 0H6L3 3.5Z" fill="#444"/></svg></div>
<div class="t" style="left:857px;top:302px;width:200px;text-align:center;font-weight:bold;font-size:15px;line-height:17px;color:#3b4250">Одноуровневый БДР</div>
<div id="grid" class="abs">
<div class="abs" id="cells" style="left:0;top:0;width:1873px;height:649px;overflow:hidden">
<div class="abs" style="left:60px;top:17px;width:1px;height:90px;background:#e2e2e2"></div>
<div class="abs" style="left:288px;top:17px;width:1px;height:90px;background:#e2e2e2"></div>
<div class="abs" style="left:523px;top:17px;width:1px;height:90px;background:#e2e2e2"></div>
<div class="abs" style="left:669px;top:17px;width:1px;height:90px;background:#e2e2e2"></div>
<div class="abs" style="left:814px;top:17px;width:1px;height:90px;background:#e2e2e2"></div>
<div class="abs" style="left:960px;top:17px;width:1px;height:90px;background:#e2e2e2"></div>
<div class="abs" style="left:1105px;top:17px;width:1px;height:90px;background:#e2e2e2"></div>
<div class="abs" style="left:1251px;top:17px;width:1px;height:90px;background:#e2e2e2"></div>
<div class="abs" style="left:1396px;top:17px;width:1px;height:90px;background:#e2e2e2"></div>
<div class="abs" style="left:1542px;top:17px;width:1px;height:90px;background:#e2e2e2"></div>
<div class="abs" style="left:1687px;top:17px;width:1px;height:90px;background:#e2e2e2"></div>
<div class="abs" style="left:1832px;top:17px;width:1px;height:90px;background:#e2e2e2"></div>
<div class="abs" style="left:1977px;top:17px;width:1px;height:90px;background:#e2e2e2"></div>
<div class="abs" style="left:44px;top:45px;width:1900px;height:1px;background:#e2e2e2"></div>
<div class="abs" style="left:44px;top:62px;width:1900px;height:1px;background:#e2e2e2"></div>
<div class="abs" style="left:44px;top:90px;width:1900px;height:1px;background:#e2e2e2"></div>
<div class="abs" style="left:44px;top:107px;width:1900px;height:1px;background:#e2e2e2"></div>
<div class="abs" style="left:61px;top:108px;width:1900px;height:34px;background:#104e8b"></div>
<div class="abs" style="left:61px;top:143px;width:1900px;height:16px;background:#1874cd"></div>
<div class="abs" style="left:61px;top:160px;width:1900px;height:16px;background:#5cacee"></div>
<div class="abs" style="left:61px;top:177px;width:1900px;height:32px;background:#b0e2ff"></div>
<div class="abs" style="left:61px;top:326px;width:1900px;height:16px;background:#b0e2ff"></div>
<div class="abs" style="left:61px;top:377px;width:1900px;height:16px;background:#5cacee"></div>
<div class="abs" style="left:61px;top:394px;width:1900px;height:32px;background:#b0e2ff"></div>
<div class="abs" style="left:61px;top:527px;width:1900px;height:16px;background:#b0e2ff"></div>
<div class="abs" style="left:61px;top:645px;width:1900px;height:16px;background:#b0e2ff"></div>
<div class="abs" style="left:60px;top:107px;width:1900px;height:1px;background:#a8aaad"></div>
<div class="abs" style="left:60px;top:142px;width:1900px;height:1px;background:#a8aaad"></div>
<div class="abs" style="left:60px;top:159px;width:1900px;height:1px;background:#a8aaad"></div>
<div class="abs" style="left:60px;top:176px;width:1900px;height:1px;background:#a8aaad"></div>
<div class="abs" style="left:60px;top:209px;width:1900px;height:1px;background:#a8aaad"></div>
<div class="abs" style="left:60px;top:242px;width:1900px;height:1px;background:#a8aaad"></div>
<div class="abs" style="left:60px;top:275px;width:1900px;height:1px;background:#a8aaad"></div>
<div class="abs" style="left:60px;top:308px;width:1900px;height:1px;background:#a8aaad"></div>
<div class="abs" style="left:60px;top:325px;width:1900px;height:1px;background:#a8aaad"></div>
<div class="abs" style="left:60px;top:342px;width:1900px;height:1px;background:#a8aaad"></div>
<div class="abs" style="left:60px;top:359px;width:1900px;height:1px;background:#a8aaad"></div>
<div class="abs" style="left:60px;top:376px;width:1900px;height:1px;background:#a8aaad"></div>
<div class="abs" style="left:60px;top:393px;width:1900px;height:1px;background:#a8aaad"></div>
<div class="abs" style="left:60px;top:426px;width:1900px;height:1px;background:#a8aaad"></div>
<div class="abs" style="left:60px;top:443px;width:1900px;height:1px;background:#a8aaad"></div>
<div class="abs" style="left:60px;top:476px;width:1900px;height:1px;background:#a8aaad"></div>
<div class="abs" style="left:60px;top:509px;width:1900px;height:1px;background:#a8aaad"></div>
<div class="abs" style="left:60px;top:526px;width:1900px;height:1px;background:#a8aaad"></div>
<div class="abs" style="left:60px;top:543px;width:1900px;height:1px;background:#a8aaad"></div>
<div class="abs" style="left:60px;top:560px;width:1900px;height:1px;background:#a8aaad"></div>
<div class="abs" style="left:60px;top:577px;width:1900px;height:1px;background:#a8aaad"></div>
<div class="abs" style="left:60px;top:594px;width:1900px;height:1px;background:#a8aaad"></div>
<div class="abs" style="left:60px;top:611px;width:1900px;height:1px;background:#a8aaad"></div>
<div class="abs" style="left:60px;top:644px;width:1900px;height:1px;background:#a8aaad"></div>
<div class="abs" style="left:60px;top:107px;width:1px;height:700px;background:#9a9a9a"></div>
<div class="abs" style="left:288px;top:107px;width:1px;height:700px;background:#9a9a9a"></div>
<div class="abs" style="left:523px;top:107px;width:1px;height:700px;background:#9a9a9a"></div>
<div class="abs" style="left:669px;top:107px;width:1px;height:700px;background:#9a9a9a"></div>
<div class="abs" style="left:814px;top:107px;width:1px;height:700px;background:#9a9a9a"></div>
<div class="abs" style="left:960px;top:107px;width:1px;height:700px;background:#9a9a9a"></div>
<div class="abs" style="left:1105px;top:107px;width:1px;height:700px;background:#9a9a9a"></div>
<div class="abs" style="left:1251px;top:107px;width:1px;height:700px;background:#9a9a9a"></div>
<div class="abs" style="left:1396px;top:107px;width:1px;height:700px;background:#9a9a9a"></div>
<div class="abs" style="left:1542px;top:107px;width:1px;height:700px;background:#9a9a9a"></div>
<div class="abs" style="left:1687px;top:107px;width:1px;height:700px;background:#9a9a9a"></div>
<div class="abs" style="left:1832px;top:107px;width:1px;height:700px;background:#9a9a9a"></div>
<div class="abs" style="left:1977px;top:107px;width:1px;height:700px;background:#9a9a9a"></div>
<div class="abs" style="left:288px;top:17px;width:235px;height:73px;background:#ffff00"></div>
<div class="abs" style="left:60px;top:45px;width:464px;height:1px;background:#4d4d4d"></div>
<div class="abs" style="left:60px;top:62px;width:464px;height:1px;background:#4d4d4d"></div>
<div class="abs" style="left:60px;top:90px;width:464px;height:1px;background:#4d4d4d"></div>
<div class="abs" style="left:60px;top:17px;width:1px;height:74px;background:#333"></div>
<div class="abs" style="left:288px;top:17px;width:1px;height:74px;background:#8a8a8a"></div>
<div class="abs" style="left:523px;top:17px;width:1px;height:74px;background:#8a8a8a"></div>
<div class="abs" style="left:64px;top:30px;width:400px;height:15px;font-size:12px;line-height:15px;color:#1a1a1a;white-space:nowrap;letter-spacing:.35px;">Проект</div>
<div class="abs" style="left:64px;top:47px;width:400px;height:15px;font-size:12px;line-height:15px;color:#1a1a1a;white-space:nowrap;letter-spacing:.35px;">ЦФО</div>
<div class="abs" style="left:64px;top:75px;width:400px;height:15px;font-size:12px;line-height:15px;color:#1a1a1a;white-space:nowrap;letter-spacing:.35px;">Сценарий</div>
<div class="abs" style="left:292px;top:30px;width:400px;height:15px;font-size:12px;line-height:15px;color:#1a1a1a;white-space:nowrap;letter-spacing:.35px;">Основной проект</div>
<div class="abs" style="left:292px;top:47px;width:400px;height:15px;font-size:12px;line-height:15px;color:#1a1a1a;white-space:nowrap;letter-spacing:.35px;">IT департамент</div>
<div class="abs" style="left:292px;top:75px;width:400px;height:15px;font-size:12px;line-height:15px;color:#1a1a1a;white-space:nowrap;letter-spacing:.35px;">Бюджет от 1кв2021</div>
<div class="abs" style="left:61px;top:117px;width:227px;height:16px;text-align:center;font-weight:bold;font-size:13px;line-height:16px;color:#fff;white-space:nowrap">Бюджетная статья</div>
<div class="abs" style="left:289px;top:117px;width:234px;height:16px;text-align:center;font-weight:bold;font-size:13px;line-height:16px;color:#fff;white-space:nowrap">Комментарий</div>
<div class="abs" style="left:524px;top:117px;width:145px;height:16px;text-align:center;font-weight:bold;font-size:13px;line-height:16px;color:#fff;white-space:nowrap">Итого</div>
<div class="abs" style="left:670px;top:117px;width:144px;height:16px;text-align:center;font-weight:bold;font-size:13px;line-height:16px;color:#fff;white-space:nowrap">Январь 2021 г.</div>
<div class="abs" style="left:815px;top:117px;width:145px;height:16px;text-align:center;font-weight:bold;font-size:13px;line-height:16px;color:#fff;white-space:nowrap">Февраль 2021 г.</div>
<div class="abs" style="left:961px;top:117px;width:144px;height:16px;text-align:center;font-weight:bold;font-size:13px;line-height:16px;color:#fff;white-space:nowrap">Март 2021 г.</div>
<div class="abs" style="left:1106px;top:117px;width:145px;height:16px;text-align:center;font-weight:bold;font-size:13px;line-height:16px;color:#fff;white-space:nowrap">Апрель 2021 г.</div>
<div class="abs" style="left:1252px;top:117px;width:144px;height:16px;text-align:center;font-weight:bold;font-size:13px;line-height:16px;color:#fff;white-space:nowrap">Май 2021 г.</div>
<div class="abs" style="left:1397px;top:117px;width:145px;height:16px;text-align:center;font-weight:bold;font-size:13px;line-height:16px;color:#fff;white-space:nowrap">Июнь 2021 г.</div>
<div class="abs" style="left:1543px;top:117px;width:144px;height:16px;text-align:center;font-weight:bold;font-size:13px;line-height:16px;color:#fff;white-space:nowrap">Июль 2021 г.</div>
<div class="abs" style="left:1688px;top:117px;width:144px;height:16px;text-align:center;font-weight:bold;font-size:13px;line-height:16px;color:#fff;white-space:nowrap">Август 2021 г.</div>
<div class="abs" style="left:1851px;top:117px;width:60px;height:16px;font-weight:bold;font-size:13px;line-height:16px;color:#fff;white-space:nowrap">Сентябрь 2021 г.</div>
<div class="abs" style="left:64px;top:143px;width:220px;height:16px;font-size:13px;line-height:17px;color:#fff;white-space:nowrap">БДР</div>
<div class="abs" style="left:289px;top:143px;width:234px;height:16px;text-align:right;padding-right:3px;line-height:16px;white-space:nowrap;color:#fff"><span class="n">0,00</span></div>
<div class="abs" style="left:524px;top:143px;width:145px;height:16px;text-align:right;padding-right:3px;line-height:16px;white-space:nowrap;color:#fff"><span class="n">0,00</span></div>
<div class="abs" style="left:670px;top:143px;width:144px;height:16px;text-align:right;padding-right:3px;line-height:16px;white-space:nowrap;color:#fff"><span class="n">0,00</span></div>
<div class="abs" style="left:815px;top:143px;width:145px;height:16px;text-align:right;padding-right:3px;line-height:16px;white-space:nowrap;color:#fff"><span class="n">0,00</span></div>
<div class="abs" style="left:961px;top:143px;width:144px;height:16px;text-align:right;padding-right:3px;line-height:16px;white-space:nowrap;color:#fff"><span class="n">0,00</span></div>
<div class="abs" style="left:1106px;top:143px;width:145px;height:16px;text-align:right;padding-right:3px;line-height:16px;white-space:nowrap;color:#fff"><span class="n">0,00</span></div>
<div class="abs" style="left:1252px;top:143px;width:144px;height:16px;text-align:right;padding-right:3px;line-height:16px;white-space:nowrap;color:#fff"><span class="n">0,00</span></div>
<div class="abs" style="left:1397px;top:143px;width:145px;height:16px;text-align:right;padding-right:3px;line-height:16px;white-space:nowrap;color:#fff"><span class="n">0,00</span></div>
<div class="abs" style="left:1543px;top:143px;width:144px;height:16px;text-align:right;padding-right:3px;line-height:16px;white-space:nowrap;color:#fff"><span class="n">0,00</span></div>
<div class="abs" style="left:1688px;top:143px;width:144px;height:16px;text-align:right;padding-right:3px;line-height:16px;white-space:nowrap;color:#fff"><span class="n">0,00</span></div>
<div class="abs" style="left:1833px;top:143px;width:144px;height:16px;text-align:right;padding-right:3px;line-height:16px;white-space:nowrap;color:#fff"><span class="n">0,00</span></div>
<div class="abs" style="left:71px;top:160px;width:220px;height:16px;color:#000"><span class="w">Доходы</span></div>
<div class="abs" style="left:289px;top:160px;width:234px;height:16px;text-align:right;padding-right:3px;line-height:16px;white-space:nowrap;color:#000"><span class="n">0,00</span></div>
<div class="abs" style="left:524px;top:160px;width:145px;height:16px;text-align:right;padding-right:3px;line-height:16px;white-space:nowrap;color:#000"><span class="n">0,00</span></div>
<div class="abs" style="left:670px;top:160px;width:144px;height:16px;text-align:right;padding-right:3px;line-height:16px;white-space:nowrap;color:#000"><span class="n">0,00</span></div>
<div class="abs" style="left:815px;top:160px;width:145px;height:16px;text-align:right;padding-right:3px;line-height:16px;white-space:nowrap;color:#000"><span class="n">0,00</span></div>
<div class="abs" style="left:961px;top:160px;width:144px;height:16px;text-align:right;padding-right:3px;line-height:16px;white-space:nowrap;color:#000"><span class="n">0,00</span></div>
<div class="abs" style="left:1106px;top:160px;width:145px;height:16px;text-align:right;padding-right:3px;line-height:16px;white-space:nowrap;color:#000"><span class="n">0,00</span></div>
<div class="abs" style="left:1252px;top:160px;width:144px;height:16px;text-align:right;padding-right:3px;line-height:16px;white-space:nowrap;color:#000"><span class="n">0,00</span></div>
<div class="abs" style="left:1397px;top:160px;width:145px;height:16px;text-align:right;padding-right:3px;line-height:16px;white-space:nowrap;color:#000"><span class="n">0,00</span></div>
<div class="abs" style="left:1543px;top:160px;width:144px;height:16px;text-align:right;padding-right:3px;line-height:16px;white-space:nowrap;color:#000"><span class="n">0,00</span></div>
<div class="abs" style="left:1688px;top:160px;width:144px;height:16px;text-align:right;padding-right:3px;line-height:16px;white-space:nowrap;color:#000"><span class="n">0,00</span></div>
<div class="abs" style="left:1833px;top:160px;width:144px;height:16px;text-align:right;padding-right:3px;line-height:16px;white-space:nowrap;color:#000"><span class="n">0,00</span></div>
<div class="abs" style="left:78px;top:177px;width:220px;height:16px;color:#000"><span class="w">Доходы от основной</span></div>
<div class="abs" style="left:78px;top:193px;width:220px;height:16px;color:#000"><span class="w">реализации</span></div>
<div class="abs" style="left:289px;top:193px;width:234px;height:16px;text-align:right;padding-right:3px;line-height:16px;white-space:nowrap;color:#000"><span class="n">0,00</span></div>
<div class="abs" style="left:524px;top:193px;width:145px;height:16px;text-align:right;padding-right:3px;line-height:16px;white-space:nowrap;color:#000"><span class="n">0,00</span></div>
<div class="abs" style="left:670px;top:193px;width:144px;height:16px;text-align:right;padding-right:3px;line-height:16px;white-space:nowrap;color:#000"><span class="n">0,00</span></div>
<div class="abs" style="left:815px;top:193px;width:145px;height:16px;text-align:right;padding-right:3px;line-height:16px;white-space:nowrap;color:#000"><span class="n">0,00</span></div>
<div class="abs" style="left:961px;top:193px;width:144px;height:16px;text-align:right;padding-right:3px;line-height:16px;white-space:nowrap;color:#000"><span class="n">0,00</span></div>
<div class="abs" style="left:1106px;top:193px;width:145px;height:16px;text-align:right;padding-right:3px;line-height:16px;white-space:nowrap;color:#000"><span class="n">0,00</span></div>
<div class="abs" style="left:1252px;top:193px;width:144px;height:16px;text-align:right;padding-right:3px;line-height:16px;white-space:nowrap;color:#000"><span class="n">0,00</span></div>
<div class="abs" style="left:1397px;top:193px;width:145px;height:16px;text-align:right;padding-right:3px;line-height:16px;white-space:nowrap;color:#000"><span class="n">0,00</span></div>
<div class="abs" style="left:1543px;top:193px;width:144px;height:16px;text-align:right;padding-right:3px;line-height:16px;white-space:nowrap;color:#000"><span class="n">0,00</span></div>
<div class="abs" style="left:1688px;top:193px;width:144px;height:16px;text-align:right;padding-right:3px;line-height:16px;white-space:nowrap;color:#000"><span class="n">0,00</span></div>
<div class="abs" style="left:1833px;top:193px;width:144px;height:16px;text-align:right;padding-right:3px;line-height:16px;white-space:nowrap;color:#000"><span class="n">0,00</span></div>
<div class="abs" style="left:85px;top:210px;width:220px;height:16px;color:#000"><span class="w">Реализация собственной</span></div>
<div class="abs" style="left:85px;top:226px;width:220px;height:16px;color:#000"><span class="w">продукции</span></div>
<div class="abs" style="left:289px;top:226px;width:234px;height:16px;text-align:right;padding-right:3px;line-height:16px;white-space:nowrap;color:#000"><span class="n">0,00</span></div>
<div class="abs" style="left:524px;top:226px;width:145px;height:16px;text-align:right;padding-right:3px;line-height:16px;white-space:nowrap;color:#000"><span class="n">0,00</span></div>
<div class="abs" style="left:670px;top:226px;width:144px;height:16px;text-align:right;padding-right:3px;line-height:16px;white-space:nowrap;color:#000"><span class="n">0,00</span></div>
<div class="abs" style="left:815px;top:226px;width:145px;height:16px;text-align:right;padding-right:3px;line-height:16px;white-space:nowrap;color:#000"><span class="n">0,00</span></div>
<div class="abs" style="left:961px;top:226px;width:144px;height:16px;text-align:right;padding-right:3px;line-height:16px;white-space:nowrap;color:#000"><span class="n">0,00</span></div>
<div class="abs" style="left:1106px;top:226px;width:145px;height:16px;text-align:right;padding-right:3px;line-height:16px;white-space:nowrap;color:#000"><span class="n">0,00</span></div>
<div class="abs" style="left:1252px;top:226px;width:144px;height:16px;text-align:right;padding-right:3px;line-height:16px;white-space:nowrap;color:#000"><span class="n">0,00</span></div>
<div class="abs" style="left:1397px;top:226px;width:145px;height:16px;text-align:right;padding-right:3px;line-height:16px;white-space:nowrap;color:#000"><span class="n">0,00</span></div>
<div class="abs" style="left:1543px;top:226px;width:144px;height:16px;text-align:right;padding-right:3px;line-height:16px;white-space:nowrap;color:#000"><span class="n">0,00</span></div>
<div class="abs" style="left:1688px;top:226px;width:144px;height:16px;text-align:right;padding-right:3px;line-height:16px;white-space:nowrap;color:#000"><span class="n">0,00</span></div>
<div class="abs" style="left:1833px;top:226px;width:144px;height:16px;text-align:right;padding-right:3px;line-height:16px;white-space:nowrap;color:#000"><span class="n">0,00</span></div>
<div class="abs" style="left:85px;top:243px;width:220px;height:16px;color:#000"><span class="w">Реализация покупной</span></div>
<div class="abs" style="left:85px;top:259px;width:220px;height:16px;color:#000"><span class="w">продукции</span></div>
<div class="abs" style="left:289px;top:259px;width:234px;height:16px;text-align:right;padding-right:3px;line-height:16px;white-space:nowrap;color:#000"><span class="n">0,00</span></div>
<div class="abs" style="left:524px;top:259px;width:145px;height:16px;text-align:right;padding-right:3px;line-height:16px;white-space:nowrap;color:#000"><span class="n">0,00</span></div>
<div class="abs" style="left:670px;top:259px;width:144px;height:16px;text-align:right;padding-right:3px;line-height:16px;white-space:nowrap;color:#000"><span class="n">0,00</span></div>
<div class="abs" style="left:815px;top:259px;width:145px;height:16px;text-align:right;padding-right:3px;line-height:16px;white-space:nowrap;color:#000"><span class="n">0,00</span></div>
<div class="abs" style="left:961px;top:259px;width:144px;height:16px;text-align:right;padding-right:3px;line-height:16px;white-space:nowrap;color:#000"><span class="n">0,00</span></div>
<div class="abs" style="left:1106px;top:259px;width:145px;height:16px;text-align:right;padding-right:3px;line-height:16px;white-space:nowrap;color:#000"><span class="n">0,00</span></div>
<div class="abs" style="left:1252px;top:259px;width:144px;height:16px;text-align:right;padding-right:3px;line-height:16px;white-space:nowrap;color:#000"><span class="n">0,00</span></div>
<div class="abs" style="left:1397px;top:259px;width:145px;height:16px;text-align:right;padding-right:3px;line-height:16px;white-space:nowrap;color:#000"><span class="n">0,00</span></div>
<div class="abs" style="left:1543px;top:259px;width:144px;height:16px;text-align:right;padding-right:3px;line-height:16px;white-space:nowrap;color:#000"><span class="n">0,00</span></div>
<div class="abs" style="left:1688px;top:259px;width:144px;height:16px;text-align:right;padding-right:3px;line-height:16px;white-space:nowrap;color:#000"><span class="n">0,00</span></div>
<div class="abs" style="left:1833px;top:259px;width:144px;height:16px;text-align:right;padding-right:3px;line-height:16px;white-space:nowrap;color:#000"><span class="n">0,00</span></div>
<div class="abs" style="left:85px;top:276px;width:220px;height:16px;color:#000"><span class="w">Продажа сопутствующих</span></div>
<div class="abs" style="left:85px;top:292px;width:220px;height:16px;color:#000"><span class="w">услуг</span></div>
<div class="abs" style="left:289px;top:292px;width:234px;height:16px;text-align:right;padding-right:3px;line-height:16px;white-space:nowrap;color:#000"><span class="n">0,00</span></div>
<div class="abs" style="left:524px;top:292px;width:145px;height:16px;text-align:right;padding-right:3px;line-height:16px;white-space:nowrap;color:#000"><span class="n">0,00</span></div>
<div class="abs" style="left:670px;top:292px;width:144px;height:16px;text-align:right;padding-right:3px;line-height:16px;white-space:nowrap;color:#000"><span class="n">0,00</span></div>
<div class="abs" style="left:815px;top:292px;width:145px;height:16px;text-align:right;padding-right:3px;line-height:16px;white-space:nowrap;color:#000"><span class="n">0,00</span></div>
<div class="abs" style="left:961px;top:292px;width:144px;height:16px;text-align:right;padding-right:3px;line-height:16px;white-space:nowrap;color:#000"><span class="n">0,00</span></div>
<div class="abs" style="left:1106px;top:292px;width:145px;height:16px;text-align:right;padding-right:3px;line-height:16px;white-space:nowrap;color:#000"><span class="n">0,00</span></div>
<div class="abs" style="left:1252px;top:292px;width:144px;height:16px;text-align:right;padding-right:3px;line-height:16px;white-space:nowrap;color:#000"><span class="n">0,00</span></div>
<div class="abs" style="left:1397px;top:292px;width:145px;height:16px;text-align:right;padding-right:3px;line-height:16px;white-space:nowrap;color:#000"><span class="n">0,00</span></div>
<div class="abs" style="left:1543px;top:292px;width:144px;height:16px;text-align:right;padding-right:3px;line-height:16px;white-space:nowrap;color:#000"><span class="n">0,00</span></div>
<div class="abs" style="left:1688px;top:292px;width:144px;height:16px;text-align:right;padding-right:3px;line-height:16px;white-space:nowrap;color:#000"><span class="n">0,00</span></div>
<div class="abs" style="left:1833px;top:292px;width:144px;height:16px;text-align:right;padding-right:3px;line-height:16px;white-space:nowrap;color:#000"><span class="n">0,00</span></div>
<div class="abs" style="left:85px;top:309px;width:220px;height:16px;color:#000"><span class="w">Услуги по установке</span></div>
<div class="abs" style="left:289px;top:309px;width:234px;height:16px;text-align:right;padding-right:3px;line-height:16px;white-space:nowrap;color:#000"><span class="n">0,00</span></div>
<div class="abs" style="left:524px;top:309px;width:145px;height:16px;text-align:right;padding-right:3px;line-height:16px;white-space:nowrap;color:#000"><span class="n">0,00</span></div>
<div class="abs" style="left:670px;top:309px;width:144px;height:16px;text-align:right;padding-right:3px;line-height:16px;white-space:nowrap;color:#000"><span class="n">0,00</span></div>
<div class="abs" style="left:815px;top:309px;width:145px;height:16px;text-align:right;padding-right:3px;line-height:16px;white-space:nowrap;color:#000"><span class="n">0,00</span></div>
<div class="abs" style="left:961px;top:309px;width:144px;height:16px;text-align:right;padding-right:3px;line-height:16px;white-space:nowrap;color:#000"><span class="n">0,00</span></div>
<div class="abs" style="left:1106px;top:309px;width:145px;height:16px;text-align:right;padding-right:3px;line-height:16px;white-space:nowrap;color:#000"><span class="n">0,00</span></div>
<div class="abs" style="left:1252px;top:309px;width:144px;height:16px;text-align:right;padding-right:3px;line-height:16px;white-space:nowrap;color:#000"><span class="n">0,00</span></div>
<div class="abs" style="left:1397px;top:309px;width:145px;height:16px;text-align:right;padding-right:3px;line-height:16px;white-space:nowrap;color:#000"><span class="n">0,00</span></div>
<div class="abs" style="left:1543px;top:309px;width:144px;height:16px;text-align:right;padding-right:3px;line-height:16px;white-space:nowrap;color:#000"><span class="n">0,00</span></div>
<div class="abs" style="left:1688px;top:309px;width:144px;height:16px;text-align:right;padding-right:3px;line-height:16px;white-space:nowrap;color:#000"><span class="n">0,00</span></div>
<div class="abs" style="left:1833px;top:309px;width:144px;height:16px;text-align:right;padding-right:3px;line-height:16px;white-space:nowrap;color:#000"><span class="n">0,00</span></div>
<div class="abs" style="left:78px;top:326px;width:220px;height:16px;color:#000"><span class="w">Прочие доходы</span></div>
<div class="abs" style="left:289px;top:326px;width:234px;height:16px;text-align:right;padding-right:3px;line-height:16px;white-space:nowrap;color:#000"><span class="n">0,00</span></div>
<div class="abs" style="left:524px;top:326px;width:145px;height:16px;text-align:right;padding-right:3px;line-height:16px;white-space:nowrap;color:#000"><span class="n">0,00</span></div>
<div class="abs" style="left:670px;top:326px;width:144px;height:16px;text-align:right;padding-right:3px;line-height:16px;white-space:nowrap;color:#000"><span class="n">0,00</span></div>
<div class="abs" style="left:815px;top:326px;width:145px;height:16px;text-align:right;padding-right:3px;line-height:16px;white-space:nowrap;color:#000"><span class="n">0,00</span></div>
<div class="abs" style="left:961px;top:326px;width:144px;height:16px;text-align:right;padding-right:3px;line-height:16px;white-space:nowrap;color:#000"><span class="n">0,00</span></div>
<div class="abs" style="left:1106px;top:326px;width:145px;height:16px;text-align:right;padding-right:3px;line-height:16px;white-space:nowrap;color:#000"><span class="n">0,00</span></div>
<div class="abs" style="left:1252px;top:326px;width:144px;height:16px;text-align:right;padding-right:3px;line-height:16px;white-space:nowrap;color:#000"><span class="n">0,00</span></div>
<div class="abs" style="left:1397px;top:326px;width:145px;height:16px;text-align:right;padding-right:3px;line-height:16px;white-space:nowrap;color:#000"><span class="n">0,00</span></div>
<div class="abs" style="left:1543px;top:326px;width:144px;height:16px;text-align:right;padding-right:3px;line-height:16px;white-space:nowrap;color:#000"><span class="n">0,00</span></div>
<div class="abs" style="left:1688px;top:326px;width:144px;height:16px;text-align:right;padding-right:3px;line-height:16px;white-space:nowrap;color:#000"><span class="n">0,00</span></div>
<div class="abs" style="left:1833px;top:326px;width:144px;height:16px;text-align:right;padding-right:3px;line-height:16px;white-space:nowrap;color:#000"><span class="n">0,00</span></div>
<div class="abs" style="left:85px;top:343px;width:220px;height:16px;color:#000"><span class="w">Доходы от аренды</span></div>
<div class="abs" style="left:289px;top:343px;width:234px;height:16px;text-align:right;padding-right:3px;line-height:16px;white-space:nowrap;color:#000"><span class="n">0,00</span></div>
<div class="abs" style="left:524px;top:343px;width:145px;height:16px;text-align:right;padding-right:3px;line-height:16px;white-space:nowrap;color:#000"><span class="n">0,00</span></div>
<div class="abs" style="left:670px;top:343px;width:144px;height:16px;text-align:right;padding-right:3px;line-height:16px;white-space:nowrap;color:#000"><span class="n">0,00</span></div>
<div class="abs" style="left:815px;top:343px;width:145px;height:16px;text-align:right;padding-right:3px;line-height:16px;white-space:nowrap;color:#000"><span class="n">0,00</span></div>
<div class="abs" style="left:961px;top:343px;width:144px;height:16px;text-align:right;padding-right:3px;line-height:16px;white-space:nowrap;color:#000"><span class="n">0,00</span></div>
<div class="abs" style="left:1106px;top:343px;width:145px;height:16px;text-align:right;padding-right:3px;line-height:16px;white-space:nowrap;color:#000"><span class="n">0,00</span></div>
<div class="abs" style="left:1252px;top:343px;width:144px;height:16px;text-align:right;padding-right:3px;line-height:16px;white-space:nowrap;color:#000"><span class="n">0,00</span></div>
<div class="abs" style="left:1397px;top:343px;width:145px;height:16px;text-align:right;padding-right:3px;line-height:16px;white-space:nowrap;color:#000"><span class="n">0,00</span></div>
<div class="abs" style="left:1543px;top:343px;width:144px;height:16px;text-align:right;padding-right:3px;line-height:16px;white-space:nowrap;color:#000"><span class="n">0,00</span></div>
<div class="abs" style="left:1688px;top:343px;width:144px;height:16px;text-align:right;padding-right:3px;line-height:16px;white-space:nowrap;color:#000"><span class="n">0,00</span></div>
<div class="abs" style="left:1833px;top:343px;width:144px;height:16px;text-align:right;padding-right:3px;line-height:16px;white-space:nowrap;color:#000"><span class="n">0,00</span></div>
<div class="abs" style="left:85px;top:360px;width:220px;height:16px;color:#000"><span class="w">Прочие не основные доходы</span></div>
<div class="abs" style="left:289px;top:360px;width:234px;height:16px;text-align:right;padding-right:3px;line-height:16px;white-space:nowrap;color:#000"><span class="n">0,00</span></div>
<div class="abs" style="left:524px;top:360px;width:145px;height:16px;text-align:right;padding-right:3px;line-height:16px;white-space:nowrap;color:#000"><span class="n">0,00</span></div>
<div class="abs" style="left:670px;top:360px;width:144px;height:16px;text-align:right;padding-right:3px;line-height:16px;white-space:nowrap;color:#000"><span class="n">0,00</span></div>
<div class="abs" style="left:815px;top:360px;width:145px;height:16px;text-align:right;padding-right:3px;line-height:16px;white-space:nowrap;color:#000"><span class="n">0,00</span></div>
<div class="abs" style="left:961px;top:360px;width:144px;height:16px;text-align:right;padding-right:3px;line-height:16px;white-space:nowrap;color:#000"><span class="n">0,00</span></div>
<div class="abs" style="left:1106px;top:360px;width:145px;height:16px;text-align:right;padding-right:3px;line-height:16px;white-space:nowrap;color:#000"><span class="n">0,00</span></div>
<div class="abs" style="left:1252px;top:360px;width:144px;height:16px;text-align:right;padding-right:3px;line-height:16px;white-space:nowrap;color:#000"><span class="n">0,00</span></div>
<div class="abs" style="left:1397px;top:360px;width:145px;height:16px;text-align:right;padding-right:3px;line-height:16px;white-space:nowrap;color:#000"><span class="n">0,00</span></div>
<div class="abs" style="left:1543px;top:360px;width:144px;height:16px;text-align:right;padding-right:3px;line-height:16px;white-space:nowrap;color:#000"><span class="n">0,00</span></div>
<div class="abs" style="left:1688px;top:360px;width:144px;height:16px;text-align:right;padding-right:3px;line-height:16px;white-space:nowrap;color:#000"><span class="n">0,00</span></div>
<div class="abs" style="left:1833px;top:360px;width:144px;height:16px;text-align:right;padding-right:3px;line-height:16px;white-space:nowrap;color:#000"><span class="n">0,00</span></div>
<div class="abs" style="left:71px;top:377px;width:220px;height:16px;color:#000"><span class="w">Расходы</span></div>
<div class="abs" style="left:289px;top:377px;width:234px;height:16px;text-align:right;padding-right:3px;line-height:16px;white-space:nowrap;color:#000"><span class="n">0,00</span></div>
<div class="abs" style="left:524px;top:377px;width:145px;height:16px;text-align:right;padding-right:3px;line-height:16px;white-space:nowrap;color:#000"><span class="n">0,00</span></div>
<div class="abs" style="left:670px;top:377px;width:144px;height:16px;text-align:right;padding-right:3px;line-height:16px;white-space:nowrap;color:#000"><span class="n">0,00</span></div>
<div class="abs" style="left:815px;top:377px;width:145px;height:16px;text-align:right;padding-right:3px;line-height:16px;white-space:nowrap;color:#000"><span class="n">0,00</span></div>
<div class="abs" style="left:961px;top:377px;width:144px;height:16px;text-align:right;padding-right:3px;line-height:16px;white-space:nowrap;color:#000"><span class="n">0,00</span></div>
<div class="abs" style="left:1106px;top:377px;width:145px;height:16px;text-align:right;padding-right:3px;line-height:16px;white-space:nowrap;color:#000"><span class="n">0,00</span></div>
<div class="abs" style="left:1252px;top:377px;width:144px;height:16px;text-align:right;padding-right:3px;line-height:16px;white-space:nowrap;color:#000"><span class="n">0,00</span></div>
<div class="abs" style="left:1397px;top:377px;width:145px;height:16px;text-align:right;padding-right:3px;line-height:16px;white-space:nowrap;color:#000"><span class="n">0,00</span></div>
<div class="abs" style="left:1543px;top:377px;width:144px;height:16px;text-align:right;padding-right:3px;line-height:16px;white-space:nowrap;color:#000"><span class="n">0,00</span></div>
<div class="abs" style="left:1688px;top:377px;width:144px;height:16px;text-align:right;padding-right:3px;line-height:16px;white-space:nowrap;color:#000"><span class="n">0,00</span></div>
<div class="abs" style="left:1833px;top:377px;width:144px;height:16px;text-align:right;padding-right:3px;line-height:16px;white-space:nowrap;color:#000"><span class="n">0,00</span></div>
<div class="abs" style="left:78px;top:394px;width:220px;height:16px;color:#000"><span class="w">СБС проданной продукции,</span></div>
<div class="abs" style="left:78px;top:410px;width:220px;height:16px;color:#000"><span class="w">товаров, работ, услуг</span></div>
<div class="abs" style="left:289px;top:410px;width:234px;height:16px;text-align:right;padding-right:3px;line-height:16px;white-space:nowrap;color:#000"><span class="n">0,00</span></div>
<div class="abs" style="left:524px;top:410px;width:145px;height:16px;text-align:right;padding-right:3px;line-height:16px;white-space:nowrap;color:#000"><span class="n">0,00</span></div>
<div class="abs" style="left:670px;top:410px;width:144px;height:16px;text-align:right;padding-right:3px;line-height:16px;white-space:nowrap;color:#000"><span class="n">0,00</span></div>
<div class="abs" style="left:815px;top:410px;width:145px;height:16px;text-align:right;padding-right:3px;line-height:16px;white-space:nowrap;color:#000"><span class="n">0,00</span></div>
<div class="abs" style="left:961px;top:410px;width:144px;height:16px;text-align:right;padding-right:3px;line-height:16px;white-space:nowrap;color:#000"><span class="n">0,00</span></div>
<div class="abs" style="left:1106px;top:410px;width:145px;height:16px;text-align:right;padding-right:3px;line-height:16px;white-space:nowrap;color:#000"><span class="n">0,00</span></div>
<div class="abs" style="left:1252px;top:410px;width:144px;height:16px;text-align:right;padding-right:3px;line-height:16px;white-space:nowrap;color:#000"><span class="n">0,00</span></div>
<div class="abs" style="left:1397px;top:410px;width:145px;height:16px;text-align:right;padding-right:3px;line-height:16px;white-space:nowrap;color:#000"><span class="n">0,00</span></div>
<div class="abs" style="left:1543px;top:410px;width:144px;height:16px;text-align:right;padding-right:3px;line-height:16px;white-space:nowrap;color:#000"><span class="n">0,00</span></div>
<div class="abs" style="left:1688px;top:410px;width:144px;height:16px;text-align:right;padding-right:3px;line-height:16px;white-space:nowrap;color:#000"><span class="n">0,00</span></div>
<div class="abs" style="left:1833px;top:410px;width:144px;height:16px;text-align:right;padding-right:3px;line-height:16px;white-space:nowrap;color:#000"><span class="n">0,00</span></div>
<div class="abs" style="left:85px;top:427px;width:220px;height:16px;color:#000"><span class="w">Сырье и материалы</span></div>
<div class="abs" style="left:289px;top:427px;width:234px;height:16px;text-align:right;padding-right:3px;line-height:16px;white-space:nowrap;color:#000"><span class="n">0,00</span></div>
<div class="abs" style="left:524px;top:427px;width:145px;height:16px;text-align:right;padding-right:3px;line-height:16px;white-space:nowrap;color:#000"><span class="n">0,00</span></div>
<div class="abs" style="left:670px;top:427px;width:144px;height:16px;text-align:right;padding-right:3px;line-height:16px;white-space:nowrap;color:#000"><span class="n">0,00</span></div>
<div class="abs" style="left:815px;top:427px;width:145px;height:16px;text-align:right;padding-right:3px;line-height:16px;white-space:nowrap;color:#000"><span class="n">0,00</span></div>
<div class="abs" style="left:961px;top:427px;width:144px;height:16px;text-align:right;padding-right:3px;line-height:16px;white-space:nowrap;color:#000"><span class="n">0,00</span></div>
<div class="abs" style="left:1106px;top:427px;width:145px;height:16px;text-align:right;padding-right:3px;line-height:16px;white-space:nowrap;color:#000"><span class="n">0,00</span></div>
<div class="abs" style="left:1252px;top:427px;width:144px;height:16px;text-align:right;padding-right:3px;line-height:16px;white-space:nowrap;color:#000"><span class="n">0,00</span></div>
<div class="abs" style="left:1397px;top:427px;width:145px;height:16px;text-align:right;padding-right:3px;line-height:16px;white-space:nowrap;color:#000"><span class="n">0,00</span></div>
<div class="abs" style="left:1543px;top:427px;width:144px;height:16px;text-align:right;padding-right:3px;line-height:16px;white-space:nowrap;color:#000"><span class="n">0,00</span></div>
<div class="abs" style="left:1688px;top:427px;width:144px;height:16px;text-align:right;padding-right:3px;line-height:16px;white-space:nowrap;color:#000"><span class="n">0,00</span></div>
<div class="abs" style="left:1833px;top:427px;width:144px;height:16px;text-align:right;padding-right:3px;line-height:16px;white-space:nowrap;color:#000"><span class="n">0,00</span></div>
<div class="abs" style="left:85px;top:444px;width:220px;height:16px;color:#000"><span class="w">Услуги сторонних</span></div>
<div class="abs" style="left:85px;top:460px;width:220px;height:16px;color:#000"><span class="w">организаций</span></div>
<div class="abs" style="left:289px;top:460px;width:234px;height:16px;text-align:right;padding-right:3px;line-height:16px;white-space:nowrap;color:#000"><span class="n">0,00</span></div>
<div class="abs" style="left:524px;top:460px;width:145px;height:16px;text-align:right;padding-right:3px;line-height:16px;white-space:nowrap;color:#000"><span class="n">0,00</span></div>
<div class="abs" style="left:670px;top:460px;width:144px;height:16px;text-align:right;padding-right:3px;line-height:16px;white-space:nowrap;color:#000"><span class="n">0,00</span></div>
<div class="abs" style="left:815px;top:460px;width:145px;height:16px;text-align:right;padding-right:3px;line-height:16px;white-space:nowrap;color:#000"><span class="n">0,00</span></div>
<div class="abs" style="left:961px;top:460px;width:144px;height:16px;text-align:right;padding-right:3px;line-height:16px;white-space:nowrap;color:#000"><span class="n">0,00</span></div>
<div class="abs" style="left:1106px;top:460px;width:145px;height:16px;text-align:right;padding-right:3px;line-height:16px;white-space:nowrap;color:#000"><span class="n">0,00</span></div>
<div class="abs" style="left:1252px;top:460px;width:144px;height:16px;text-align:right;padding-right:3px;line-height:16px;white-space:nowrap;color:#000"><span class="n">0,00</span></div>
<div class="abs" style="left:1397px;top:460px;width:145px;height:16px;text-align:right;padding-right:3px;line-height:16px;white-space:nowrap;color:#000"><span class="n">0,00</span></div>
<div class="abs" style="left:1543px;top:460px;width:144px;height:16px;text-align:right;padding-right:3px;line-height:16px;white-space:nowrap;color:#000"><span class="n">0,00</span></div>
<div class="abs" style="left:1688px;top:460px;width:144px;height:16px;text-align:right;padding-right:3px;line-height:16px;white-space:nowrap;color:#000"><span class="n">0,00</span></div>
<div class="abs" style="left:1833px;top:460px;width:144px;height:16px;text-align:right;padding-right:3px;line-height:16px;white-space:nowrap;color:#000"><span class="n">0,00</span></div>
<div class="abs" style="left:85px;top:477px;width:220px;height:16px;color:#000"><span class="w">Затраты на лицензии, ПО и т.</span></div>
<div class="abs" style="left:85px;top:493px;width:220px;height:16px;color:#000"><span class="w">д.</span></div>
<div class="abs" style="left:289px;top:493px;width:234px;height:16px;text-align:right;padding-right:3px;line-height:16px;white-space:nowrap;color:#000"><span class="n">0,00</span></div>
<div class="abs" style="left:524px;top:493px;width:145px;height:16px;text-align:right;padding-right:3px;line-height:16px;white-space:nowrap;color:#000"><span class="n">0,00</span></div>
<div class="abs" style="left:670px;top:493px;width:144px;height:16px;text-align:right;padding-right:3px;line-height:16px;white-space:nowrap;color:#000"><span class="n">0,00</span></div>
<div class="abs" style="left:815px;top:493px;width:145px;height:16px;text-align:right;padding-right:3px;line-height:16px;white-space:nowrap;color:#000"><span class="n">0,00</span></div>
<div class="abs" style="left:961px;top:493px;width:144px;height:16px;text-align:right;padding-right:3px;line-height:16px;white-space:nowrap;color:#000"><span class="n">0,00</span></div>
<div class="abs" style="left:1106px;top:493px;width:145px;height:16px;text-align:right;padding-right:3px;line-height:16px;white-space:nowrap;color:#000"><span class="n">0,00</span></div>
<div class="abs" style="left:1252px;top:493px;width:144px;height:16px;text-align:right;padding-right:3px;line-height:16px;white-space:nowrap;color:#000"><span class="n">0,00</span></div>
<div class="abs" style="left:1397px;top:493px;width:145px;height:16px;text-align:right;padding-right:3px;line-height:16px;white-space:nowrap;color:#000"><span class="n">0,00</span></div>
<div class="abs" style="left:1543px;top:493px;width:144px;height:16px;text-align:right;padding-right:3px;line-height:16px;white-space:nowrap;color:#000"><span class="n">0,00</span></div>
<div class="abs" style="left:1688px;top:493px;width:144px;height:16px;text-align:right;padding-right:3px;line-height:16px;white-space:nowrap;color:#000"><span class="n">0,00</span></div>
<div class="abs" style="left:1833px;top:493px;width:144px;height:16px;text-align:right;padding-right:3px;line-height:16px;white-space:nowrap;color:#000"><span class="n">0,00</span></div>
<div class="abs" style="left:85px;top:510px;width:220px;height:16px;color:#000"><span class="w">Амортизация ОС</span></div>
<div class="abs" style="left:289px;top:510px;width:234px;height:16px;text-align:right;padding-right:3px;line-height:16px;white-space:nowrap;color:#000"><span class="n">0,00</span></div>
<div class="abs" style="left:524px;top:510px;width:145px;height:16px;text-align:right;padding-right:3px;line-height:16px;white-space:nowrap;color:#000"><span class="n">0,00</span></div>
<div class="abs" style="left:670px;top:510px;width:144px;height:16px;text-align:right;padding-right:3px;line-height:16px;white-space:nowrap;color:#000"><span class="n">0,00</span></div>
<div class="abs" style="left:815px;top:510px;width:145px;height:16px;text-align:right;padding-right:3px;line-height:16px;white-space:nowrap;color:#000"><span class="n">0,00</span></div>
<div class="abs" style="left:961px;top:510px;width:144px;height:16px;text-align:right;padding-right:3px;line-height:16px;white-space:nowrap;color:#000"><span class="n">0,00</span></div>
<div class="abs" style="left:1106px;top:510px;width:145px;height:16px;text-align:right;padding-right:3px;line-height:16px;white-space:nowrap;color:#000"><span class="n">0,00</span></div>
<div class="abs" style="left:1252px;top:510px;width:144px;height:16px;text-align:right;padding-right:3px;line-height:16px;white-space:nowrap;color:#000"><span class="n">0,00</span></div>
<div class="abs" style="left:1397px;top:510px;width:145px;height:16px;text-align:right;padding-right:3px;line-height:16px;white-space:nowrap;color:#000"><span class="n">0,00</span></div>
<div class="abs" style="left:1543px;top:510px;width:144px;height:16px;text-align:right;padding-right:3px;line-height:16px;white-space:nowrap;color:#000"><span class="n">0,00</span></div>
<div class="abs" style="left:1688px;top:510px;width:144px;height:16px;text-align:right;padding-right:3px;line-height:16px;white-space:nowrap;color:#000"><span class="n">0,00</span></div>
<div class="abs" style="left:1833px;top:510px;width:144px;height:16px;text-align:right;padding-right:3px;line-height:16px;white-space:nowrap;color:#000"><span class="n">0,00</span></div>
<div class="abs" style="left:78px;top:527px;width:220px;height:16px;color:#000"><span class="w">ФОТ</span></div>
<div class="abs" style="left:289px;top:527px;width:234px;height:16px;text-align:right;padding-right:3px;line-height:16px;white-space:nowrap;color:#000"><span class="n">0,00</span></div>
<div class="abs" style="left:524px;top:527px;width:145px;height:16px;text-align:right;padding-right:3px;line-height:16px;white-space:nowrap;color:#000"><span class="n">0,00</span></div>
<div class="abs" style="left:670px;top:527px;width:144px;height:16px;text-align:right;padding-right:3px;line-height:16px;white-space:nowrap;color:#000"><span class="n">0,00</span></div>
<div class="abs" style="left:815px;top:527px;width:145px;height:16px;text-align:right;padding-right:3px;line-height:16px;white-space:nowrap;color:#000"><span class="n">0,00</span></div>
<div class="abs" style="left:961px;top:527px;width:144px;height:16px;text-align:right;padding-right:3px;line-height:16px;white-space:nowrap;color:#000"><span class="n">0,00</span></div>
<div class="abs" style="left:1106px;top:527px;width:145px;height:16px;text-align:right;padding-right:3px;line-height:16px;white-space:nowrap;color:#000"><span class="n">0,00</span></div>
<div class="abs" style="left:1252px;top:527px;width:144px;height:16px;text-align:right;padding-right:3px;line-height:16px;white-space:nowrap;color:#000"><span class="n">0,00</span></div>
<div class="abs" style="left:1397px;top:527px;width:145px;height:16px;text-align:right;padding-right:3px;line-height:16px;white-space:nowrap;color:#000"><span class="n">0,00</span></div>
<div class="abs" style="left:1543px;top:527px;width:144px;height:16px;text-align:right;padding-right:3px;line-height:16px;white-space:nowrap;color:#000"><span class="n">0,00</span></div>
<div class="abs" style="left:1688px;top:527px;width:144px;height:16px;text-align:right;padding-right:3px;line-height:16px;white-space:nowrap;color:#000"><span class="n">0,00</span></div>
<div class="abs" style="left:1833px;top:527px;width:144px;height:16px;text-align:right;padding-right:3px;line-height:16px;white-space:nowrap;color:#000"><span class="n">0,00</span></div>
<div class="abs" style="left:85px;top:544px;width:220px;height:16px;color:#000"><span class="w">Заработная плата</span></div>
<div class="abs" style="left:289px;top:544px;width:234px;height:16px;text-align:right;padding-right:3px;line-height:16px;white-space:nowrap;color:#000"><span class="n">0,00</span></div>
<div class="abs" style="left:524px;top:544px;width:145px;height:16px;text-align:right;padding-right:3px;line-height:16px;white-space:nowrap;color:#000"><span class="n">0,00</span></div>
<div class="abs" style="left:670px;top:544px;width:144px;height:16px;text-align:right;padding-right:3px;line-height:16px;white-space:nowrap;color:#000"><span class="n">0,00</span></div>
<div class="abs" style="left:815px;top:544px;width:145px;height:16px;text-align:right;padding-right:3px;line-height:16px;white-space:nowrap;color:#000"><span class="n">0,00</span></div>
<div class="abs" style="left:961px;top:544px;width:144px;height:16px;text-align:right;padding-right:3px;line-height:16px;white-space:nowrap;color:#000"><span class="n">0,00</span></div>
<div class="abs" style="left:1106px;top:544px;width:145px;height:16px;text-align:right;padding-right:3px;line-height:16px;white-space:nowrap;color:#000"><span class="n">0,00</span></div>
<div class="abs" style="left:1252px;top:544px;width:144px;height:16px;text-align:right;padding-right:3px;line-height:16px;white-space:nowrap;color:#000"><span class="n">0,00</span></div>
<div class="abs" style="left:1397px;top:544px;width:145px;height:16px;text-align:right;padding-right:3px;line-height:16px;white-space:nowrap;color:#000"><span class="n">0,00</span></div>
<div class="abs" style="left:1543px;top:544px;width:144px;height:16px;text-align:right;padding-right:3px;line-height:16px;white-space:nowrap;color:#000"><span class="n">0,00</span></div>
<div class="abs" style="left:1688px;top:544px;width:144px;height:16px;text-align:right;padding-right:3px;line-height:16px;white-space:nowrap;color:#000"><span class="n">0,00</span></div>
<div class="abs" style="left:1833px;top:544px;width:144px;height:16px;text-align:right;padding-right:3px;line-height:16px;white-space:nowrap;color:#000"><span class="n">0,00</span></div>
<div class="abs" style="left:85px;top:561px;width:220px;height:16px;color:#000"><span class="w">НДФЛ</span></div>
<div class="abs" style="left:289px;top:561px;width:234px;height:16px;text-align:right;padding-right:3px;line-height:16px;white-space:nowrap;color:#000"><span class="n">0,00</span></div>
<div class="abs" style="left:524px;top:561px;width:145px;height:16px;text-align:right;padding-right:3px;line-height:16px;white-space:nowrap;color:#000"><span class="n">0,00</span></div>
<div class="abs" style="left:670px;top:561px;width:144px;height:16px;text-align:right;padding-right:3px;line-height:16px;white-space:nowrap;color:#000"><span class="n">0,00</span></div>
<div class="abs" style="left:815px;top:561px;width:145px;height:16px;text-align:right;padding-right:3px;line-height:16px;white-space:nowrap;color:#000"><span class="n">0,00</span></div>
<div class="abs" style="left:961px;top:561px;width:144px;height:16px;text-align:right;padding-right:3px;line-height:16px;white-space:nowrap;color:#000"><span class="n">0,00</span></div>
<div class="abs" style="left:1106px;top:561px;width:145px;height:16px;text-align:right;padding-right:3px;line-height:16px;white-space:nowrap;color:#000"><span class="n">0,00</span></div>
<div class="abs" style="left:1252px;top:561px;width:144px;height:16px;text-align:right;padding-right:3px;line-height:16px;white-space:nowrap;color:#000"><span class="n">0,00</span></div>
<div class="abs" style="left:1397px;top:561px;width:145px;height:16px;text-align:right;padding-right:3px;line-height:16px;white-space:nowrap;color:#000"><span class="n">0,00</span></div>
<div class="abs" style="left:1543px;top:561px;width:144px;height:16px;text-align:right;padding-right:3px;line-height:16px;white-space:nowrap;color:#000"><span class="n">0,00</span></div>
<div class="abs" style="left:1688px;top:561px;width:144px;height:16px;text-align:right;padding-right:3px;line-height:16px;white-space:nowrap;color:#000"><span class="n">0,00</span></div>
<div class="abs" style="left:1833px;top:561px;width:144px;height:16px;text-align:right;padding-right:3px;line-height:16px;white-space:nowrap;color:#000"><span class="n">0,00</span></div>
<div class="abs" style="left:85px;top:578px;width:220px;height:16px;color:#000"><span class="w">Социальные взносы</span></div>
<div class="abs" style="left:289px;top:578px;width:234px;height:16px;text-align:right;padding-right:3px;line-height:16px;white-space:nowrap;color:#000"><span class="n">0,00</span></div>
<div class="abs" style="left:524px;top:578px;width:145px;height:16px;text-align:right;padding-right:3px;line-height:16px;white-space:nowrap;color:#000"><span class="n">0,00</span></div>
<div class="abs" style="left:670px;top:578px;width:144px;height:16px;text-align:right;padding-right:3px;line-height:16px;white-space:nowrap;color:#000"><span class="n">0,00</span></div>
<div class="abs" style="left:815px;top:578px;width:145px;height:16px;text-align:right;padding-right:3px;line-height:16px;white-space:nowrap;color:#000"><span class="n">0,00</span></div>
<div class="abs" style="left:961px;top:578px;width:144px;height:16px;text-align:right;padding-right:3px;line-height:16px;white-space:nowrap;color:#000"><span class="n">0,00</span></div>
<div class="abs" style="left:1106px;top:578px;width:145px;height:16px;text-align:right;padding-right:3px;line-height:16px;white-space:nowrap;color:#000"><span class="n">0,00</span></div>
<div class="abs" style="left:1252px;top:578px;width:144px;height:16px;text-align:right;padding-right:3px;line-height:16px;white-space:nowrap;color:#000"><span class="n">0,00</span></div>
<div class="abs" style="left:1397px;top:578px;width:145px;height:16px;text-align:right;padding-right:3px;line-height:16px;white-space:nowrap;color:#000"><span class="n">0,00</span></div>
<div class="abs" style="left:1543px;top:578px;width:144px;height:16px;text-align:right;padding-right:3px;line-height:16px;white-space:nowrap;color:#000"><span class="n">0,00</span></div>
<div class="abs" style="left:1688px;top:578px;width:144px;height:16px;text-align:right;padding-right:3px;line-height:16px;white-space:nowrap;color:#000"><span class="n">0,00</span></div>
<div class="abs" style="left:1833px;top:578px;width:144px;height:16px;text-align:right;padding-right:3px;line-height:16px;white-space:nowrap;color:#000"><span class="n">0,00</span></div>
<div class="abs" style="left:85px;top:595px;width:220px;height:16px;color:#000"><span class="w">Командировочные</span></div>
<div class="abs" style="left:289px;top:595px;width:234px;height:16px;text-align:right;padding-right:3px;line-height:16px;white-space:nowrap;color:#000"><span class="n">0,00</span></div>
<div class="abs" style="left:524px;top:595px;width:145px;height:16px;text-align:right;padding-right:3px;line-height:16px;white-space:nowrap;color:#000"><span class="n">0,00</span></div>
<div class="abs" style="left:670px;top:595px;width:144px;height:16px;text-align:right;padding-right:3px;line-height:16px;white-space:nowrap;color:#000"><span class="n">0,00</span></div>
<div class="abs" style="left:815px;top:595px;width:145px;height:16px;text-align:right;padding-right:3px;line-height:16px;white-space:nowrap;color:#000"><span class="n">0,00</span></div>
<div class="abs" style="left:961px;top:595px;width:144px;height:16px;text-align:right;padding-right:3px;line-height:16px;white-space:nowrap;color:#000"><span class="n">0,00</span></div>
<div class="abs" style="left:1106px;top:595px;width:145px;height:16px;text-align:right;padding-right:3px;line-height:16px;white-space:nowrap;color:#000"><span class="n">0,00</span></div>
<div class="abs" style="left:1252px;top:595px;width:144px;height:16px;text-align:right;padding-right:3px;line-height:16px;white-space:nowrap;color:#000"><span class="n">0,00</span></div>
<div class="abs" style="left:1397px;top:595px;width:145px;height:16px;text-align:right;padding-right:3px;line-height:16px;white-space:nowrap;color:#000"><span class="n">0,00</span></div>
<div class="abs" style="left:1543px;top:595px;width:144px;height:16px;text-align:right;padding-right:3px;line-height:16px;white-space:nowrap;color:#000"><span class="n">0,00</span></div>
<div class="abs" style="left:1688px;top:595px;width:144px;height:16px;text-align:right;padding-right:3px;line-height:16px;white-space:nowrap;color:#000"><span class="n">0,00</span></div>
<div class="abs" style="left:1833px;top:595px;width:144px;height:16px;text-align:right;padding-right:3px;line-height:16px;white-space:nowrap;color:#000"><span class="n">0,00</span></div>
<div class="abs" style="left:85px;top:612px;width:220px;height:16px;color:#000"><span class="w">Обучение и прочие расходы</span></div>
<div class="abs" style="left:85px;top:628px;width:220px;height:16px;color:#000"><span class="w">на персонал</span></div>
<div class="abs" style="left:289px;top:628px;width:234px;height:16px;text-align:right;padding-right:3px;line-height:16px;white-space:nowrap;color:#000"><span class="n">0,00</span></div>
<div class="abs" style="left:524px;top:628px;width:145px;height:16px;text-align:right;padding-right:3px;line-height:16px;white-space:nowrap;color:#000"><span class="n">0,00</span></div>
<div class="abs" style="left:670px;top:628px;width:144px;height:16px;text-align:right;padding-right:3px;line-height:16px;white-space:nowrap;color:#000"><span class="n">0,00</span></div>
<div class="abs" style="left:815px;top:628px;width:145px;height:16px;text-align:right;padding-right:3px;line-height:16px;white-space:nowrap;color:#000"><span class="n">0,00</span></div>
<div class="abs" style="left:961px;top:628px;width:144px;height:16px;text-align:right;padding-right:3px;line-height:16px;white-space:nowrap;color:#000"><span class="n">0,00</span></div>
<div class="abs" style="left:1106px;top:628px;width:145px;height:16px;text-align:right;padding-right:3px;line-height:16px;white-space:nowrap;color:#000"><span class="n">0,00</span></div>
<div class="abs" style="left:1252px;top:628px;width:144px;height:16px;text-align:right;padding-right:3px;line-height:16px;white-space:nowrap;color:#000"><span class="n">0,00</span></div>
<div class="abs" style="left:1397px;top:628px;width:145px;height:16px;text-align:right;padding-right:3px;line-height:16px;white-space:nowrap;color:#000"><span class="n">0,00</span></div>
<div class="abs" style="left:1543px;top:628px;width:144px;height:16px;text-align:right;padding-right:3px;line-height:16px;white-space:nowrap;color:#000"><span class="n">0,00</span></div>
<div class="abs" style="left:1688px;top:628px;width:144px;height:16px;text-align:right;padding-right:3px;line-height:16px;white-space:nowrap;color:#000"><span class="n">0,00</span></div>
<div class="abs" style="left:1833px;top:628px;width:144px;height:16px;text-align:right;padding-right:3px;line-height:16px;white-space:nowrap;color:#000"><span class="n">0,00</span></div>
<div class="abs" style="left:78px;top:645px;width:220px;height:16px;color:#000"><span class="w">Коммерческие расходы</span></div>
<div class="abs" style="left:289px;top:645px;width:234px;height:16px;text-align:right;padding-right:3px;line-height:16px;white-space:nowrap;color:#000"><span class="n">0,00</span></div>
<div class="abs" style="left:524px;top:645px;width:145px;height:16px;text-align:right;padding-right:3px;line-height:16px;white-space:nowrap;color:#000"><span class="n">0,00</span></div>
<div class="abs" style="left:670px;top:645px;width:144px;height:16px;text-align:right;padding-right:3px;line-height:16px;white-space:nowrap;color:#000"><span class="n">0,00</span></div>
<div class="abs" style="left:815px;top:645px;width:145px;height:16px;text-align:right;padding-right:3px;line-height:16px;white-space:nowrap;color:#000"><span class="n">0,00</span></div>
<div class="abs" style="left:961px;top:645px;width:144px;height:16px;text-align:right;padding-right:3px;line-height:16px;white-space:nowrap;color:#000"><span class="n">0,00</span></div>
<div class="abs" style="left:1106px;top:645px;width:145px;height:16px;text-align:right;padding-right:3px;line-height:16px;white-space:nowrap;color:#000"><span class="n">0,00</span></div>
<div class="abs" style="left:1252px;top:645px;width:144px;height:16px;text-align:right;padding-right:3px;line-height:16px;white-space:nowrap;color:#000"><span class="n">0,00</span></div>
<div class="abs" style="left:1397px;top:645px;width:145px;height:16px;text-align:right;padding-right:3px;line-height:16px;white-space:nowrap;color:#000"><span class="n">0,00</span></div>
<div class="abs" style="left:1543px;top:645px;width:144px;height:16px;text-align:right;padding-right:3px;line-height:16px;white-space:nowrap;color:#000"><span class="n">0,00</span></div>
<div class="abs" style="left:1688px;top:645px;width:144px;height:16px;text-align:right;padding-right:3px;line-height:16px;white-space:nowrap;color:#000"><span class="n">0,00</span></div>
<div class="abs" style="left:1833px;top:645px;width:144px;height:16px;text-align:right;padding-right:3px;line-height:16px;white-space:nowrap;color:#000"><span class="n">0,00</span></div>
<div class="abs" style="left:541px;top:21px;width:557px;height:72px;background:#d3efc8;border:2px solid #2e2e2e;overflow:hidden;padding:.5px 0 0 3px;font-size:13px;line-height:16px;color:#333;white-space:nowrap;letter-spacing:-.04px">Для создания табулы из макета зайдите в меню Макет-&gt;Макет.<br>Выберите готовый макет или создайте новый, выберите периодичность (если нужно).<br>Далее нажмите применить и выберите лист табулы на котором разместить новую<br>структуру. Должна получится похожая на эту таблица.<br>Для более детального знакомства с возможностями Табулы смотрите другие примеры.</div>
<div class="abs" style="left:1102px;top:16px;width:153px;height:33px;border:2px solid #fbc41b;border-top:none;background:#f2f2f2"></div>
</div>
<div class="abs" style="left:0px;top:0px;width:1873px;height:17px;background:#fff"></div>
<div class="abs" style="left:43px;top:1px;width:17px;height:16px;text-align:center;font-size:13px;line-height:18px;color:#000;"><span class="nc">1</span></div>
<div class="abs" style="left:61px;top:1px;width:227px;height:16px;text-align:center;font-size:13px;line-height:18px;color:#000;"><span class="nc">2</span></div>
<div class="abs" style="left:289px;top:1px;width:234px;height:16px;text-align:center;font-size:13px;line-height:18px;color:#000;"><span class="nc">3</span></div>
<div class="abs" style="left:524px;top:1px;width:145px;height:16px;text-align:center;font-size:13px;line-height:18px;color:#000;"><span class="nc">4</span></div>
<div class="abs" style="left:670px;top:1px;width:144px;height:16px;text-align:center;font-size:13px;line-height:18px;color:#000;"><span class="nc">5</span></div>
<div class="abs" style="left:815px;top:1px;width:145px;height:16px;text-align:center;font-size:13px;line-height:18px;color:#000;"><span class="nc">6</span></div>
<div class="abs" style="left:961px;top:1px;width:144px;height:16px;text-align:center;font-size:13px;line-height:18px;color:#000;"><span class="nc">7</span></div>
<div class="abs" style="left:1106px;top:1px;width:145px;height:16px;text-align:center;font-size:13px;line-height:18px;color:#000;background:#efefef;font-weight:bold;"><span class="nc">8</span></div>
<div class="abs" style="left:1252px;top:1px;width:144px;height:16px;text-align:center;font-size:13px;line-height:18px;color:#000;"><span class="nc">9</span></div>
<div class="abs" style="left:1397px;top:1px;width:145px;height:16px;text-align:center;font-size:13px;line-height:18px;color:#000;"><span class="nc">10</span></div>
<div class="abs" style="left:1543px;top:1px;width:144px;height:16px;text-align:center;font-size:13px;line-height:18px;color:#000;"><span class="nc">11</span></div>
<div class="abs" style="left:1688px;top:1px;width:144px;height:16px;text-align:center;font-size:13px;line-height:18px;color:#000;"><span class="nc">12</span></div>
<div class="abs" style="left:42px;top:0px;width:1px;height:17px;background:#b2b2b2"></div>
<div class="abs" style="left:43px;top:0px;width:1px;height:17px;background:#ececec"></div>
<div class="abs" style="left:60px;top:0px;width:1px;height:17px;background:#b2b2b2"></div>
<div class="abs" style="left:61px;top:0px;width:1px;height:17px;background:#ececec"></div>
<div class="abs" style="left:288px;top:0px;width:1px;height:17px;background:#b2b2b2"></div>
<div class="abs" style="left:289px;top:0px;width:1px;height:17px;background:#ececec"></div>
<div class="abs" style="left:523px;top:0px;width:1px;height:17px;background:#b2b2b2"></div>
<div class="abs" style="left:524px;top:0px;width:1px;height:17px;background:#ececec"></div>
<div class="abs" style="left:669px;top:0px;width:1px;height:17px;background:#b2b2b2"></div>
<div class="abs" style="left:670px;top:0px;width:1px;height:17px;background:#ececec"></div>
<div class="abs" style="left:814px;top:0px;width:1px;height:17px;background:#b2b2b2"></div>
<div class="abs" style="left:815px;top:0px;width:1px;height:17px;background:#ececec"></div>
<div class="abs" style="left:960px;top:0px;width:1px;height:17px;background:#b2b2b2"></div>
<div class="abs" style="left:961px;top:0px;width:1px;height:17px;background:#ececec"></div>
<div class="abs" style="left:1105px;top:0px;width:1px;height:17px;background:#b2b2b2"></div>
<div class="abs" style="left:1106px;top:0px;width:1px;height:17px;background:#ececec"></div>
<div class="abs" style="left:1251px;top:0px;width:1px;height:17px;background:#b2b2b2"></div>
<div class="abs" style="left:1252px;top:0px;width:1px;height:17px;background:#ececec"></div>
<div class="abs" style="left:1396px;top:0px;width:1px;height:17px;background:#b2b2b2"></div>
<div class="abs" style="left:1397px;top:0px;width:1px;height:17px;background:#ececec"></div>
<div class="abs" style="left:1542px;top:0px;width:1px;height:17px;background:#b2b2b2"></div>
<div class="abs" style="left:1543px;top:0px;width:1px;height:17px;background:#ececec"></div>
<div class="abs" style="left:1687px;top:0px;width:1px;height:17px;background:#b2b2b2"></div>
<div class="abs" style="left:1688px;top:0px;width:1px;height:17px;background:#ececec"></div>
<div class="abs" style="left:1832px;top:0px;width:1px;height:17px;background:#b2b2b2"></div>
<div class="abs" style="left:1833px;top:0px;width:1px;height:17px;background:#ececec"></div>
<div class="abs" style="left:0px;top:17px;width:1873px;height:1px;background:#b2b2b2"></div>
<div class="abs" style="left:0px;top:18px;width:42px;height:1px;background:#e6e6e6"></div>
<div class="abs" style="left:0px;top:18px;width:42px;height:631px;background:#fff"></div>
<div class="abs" style="left:1px;top:18px;width:41px;height:27px;overflow:hidden;text-align:center;font-size:13px;color:#000;line-height:27px;background:#ececec;font-weight:bold;"><span class="nc">1</span></div>
<div class="abs" style="left:0px;top:17px;width:42px;height:1px;background:#b2b2b2"></div>
<div class="abs" style="left:0px;top:46px;width:42px;height:1px;background:#ececec"></div>
<div class="abs" style="left:1px;top:46px;width:41px;height:16px;overflow:hidden;text-align:center;font-size:13px;color:#000;line-height:16px;"><span class="nc">2</span></div>
<div class="abs" style="left:0px;top:45px;width:42px;height:1px;background:#b2b2b2"></div>
<div class="abs" style="left:0px;top:63px;width:42px;height:1px;background:#ececec"></div>
<div class="abs" style="left:1px;top:63px;width:41px;height:27px;overflow:hidden;text-align:center;font-size:13px;color:#000;line-height:27px;"><span class="nc">3</span></div>
<div class="abs" style="left:0px;top:62px;width:42px;height:1px;background:#b2b2b2"></div>
<div class="abs" style="left:0px;top:91px;width:42px;height:1px;background:#ececec"></div>
<div class="abs" style="left:1px;top:91px;width:41px;height:16px;overflow:hidden;text-align:center;font-size:13px;color:#000;line-height:16px;"><span class="nc">4</span></div>
<div class="abs" style="left:0px;top:90px;width:42px;height:1px;background:#b2b2b2"></div>
<div class="abs" style="left:0px;top:108px;width:42px;height:1px;background:#ececec"></div>
<div class="abs" style="left:1px;top:108px;width:41px;height:34px;overflow:hidden;text-align:center;font-size:13px;color:#000;line-height:34px;"><span class="nc">5</span></div>
<div class="abs" style="left:0px;top:107px;width:42px;height:1px;background:#b2b2b2"></div>
<div class="abs" style="left:0px;top:143px;width:42px;height:1px;background:#ececec"></div>
<div class="abs" style="left:1px;top:143px;width:41px;height:16px;overflow:hidden;text-align:center;font-size:13px;color:#000;line-height:16px;"><span class="nc">6</span></div>
<div class="abs" style="left:0px;top:142px;width:42px;height:1px;background:#b2b2b2"></div>
<div class="abs" style="left:0px;top:160px;width:42px;height:1px;background:#ececec"></div>
<div class="abs" style="left:1px;top:160px;width:41px;height:16px;overflow:hidden;text-align:center;font-size:13px;color:#000;line-height:16px;"><span class="nc">7</span></div>
<div class="abs" style="left:0px;top:159px;width:42px;height:1px;background:#b2b2b2"></div>
<div class="abs" style="left:0px;top:177px;width:42px;height:1px;background:#ececec"></div>
<div class="abs" style="left:1px;top:177px;width:41px;height:32px;overflow:hidden;text-align:center;font-size:13px;color:#000;line-height:32px;"><span class="nc">8</span></div>
<div class="abs" style="left:0px;top:176px;width:42px;height:1px;background:#b2b2b2"></div>
<div class="abs" style="left:0px;top:210px;width:42px;height:1px;background:#ececec"></div>
<div class="abs" style="left:1px;top:210px;width:41px;height:32px;overflow:hidden;text-align:center;font-size:13px;color:#000;line-height:32px;"><span class="nc">9</span></div>
<div class="abs" style="left:0px;top:209px;width:42px;height:1px;background:#b2b2b2"></div>
<div class="abs" style="left:0px;top:243px;width:42px;height:1px;background:#ececec"></div>
<div class="abs" style="left:1px;top:243px;width:41px;height:32px;overflow:hidden;text-align:center;font-size:13px;color:#000;line-height:32px;"><span class="nc">10</span></div>
<div class="abs" style="left:0px;top:242px;width:42px;height:1px;background:#b2b2b2"></div>
<div class="abs" style="left:0px;top:276px;width:42px;height:1px;background:#ececec"></div>
<div class="abs" style="left:1px;top:276px;width:41px;height:32px;overflow:hidden;text-align:center;font-size:13px;color:#000;line-height:32px;"><span class="nc">11</span></div>
<div class="abs" style="left:0px;top:275px;width:42px;height:1px;background:#b2b2b2"></div>
<div class="abs" style="left:0px;top:309px;width:42px;height:1px;background:#ececec"></div>
<div class="abs" style="left:1px;top:309px;width:41px;height:16px;overflow:hidden;text-align:center;font-size:13px;color:#000;line-height:16px;"><span class="nc">12</span></div>
<div class="abs" style="left:0px;top:308px;width:42px;height:1px;background:#b2b2b2"></div>
<div class="abs" style="left:0px;top:326px;width:42px;height:1px;background:#ececec"></div>
<div class="abs" style="left:1px;top:326px;width:41px;height:16px;overflow:hidden;text-align:center;font-size:13px;color:#000;line-height:16px;"><span class="nc">13</span></div>
<div class="abs" style="left:0px;top:325px;width:42px;height:1px;background:#b2b2b2"></div>
<div class="abs" style="left:0px;top:343px;width:42px;height:1px;background:#ececec"></div>
<div class="abs" style="left:1px;top:343px;width:41px;height:16px;overflow:hidden;text-align:center;font-size:13px;color:#000;line-height:16px;"><span class="nc">14</span></div>
<div class="abs" style="left:0px;top:342px;width:42px;height:1px;background:#b2b2b2"></div>
<div class="abs" style="left:0px;top:360px;width:42px;height:1px;background:#ececec"></div>
<div class="abs" style="left:1px;top:360px;width:41px;height:16px;overflow:hidden;text-align:center;font-size:13px;color:#000;line-height:16px;"><span class="nc">15</span></div>
<div class="abs" style="left:0px;top:359px;width:42px;height:1px;background:#b2b2b2"></div>
<div class="abs" style="left:0px;top:377px;width:42px;height:1px;background:#ececec"></div>
<div class="abs" style="left:1px;top:377px;width:41px;height:16px;overflow:hidden;text-align:center;font-size:13px;color:#000;line-height:16px;"><span class="nc">16</span></div>
<div class="abs" style="left:0px;top:376px;width:42px;height:1px;background:#b2b2b2"></div>
<div class="abs" style="left:0px;top:394px;width:42px;height:1px;background:#ececec"></div>
<div class="abs" style="left:1px;top:394px;width:41px;height:32px;overflow:hidden;text-align:center;font-size:13px;color:#000;line-height:32px;"><span class="nc">17</span></div>
<div class="abs" style="left:0px;top:393px;width:42px;height:1px;background:#b2b2b2"></div>
<div class="abs" style="left:0px;top:427px;width:42px;height:1px;background:#ececec"></div>
<div class="abs" style="left:1px;top:427px;width:41px;height:16px;overflow:hidden;text-align:center;font-size:13px;color:#000;line-height:16px;"><span class="nc">18</span></div>
<div class="abs" style="left:0px;top:426px;width:42px;height:1px;background:#b2b2b2"></div>
<div class="abs" style="left:0px;top:444px;width:42px;height:1px;background:#ececec"></div>
<div class="abs" style="left:1px;top:444px;width:41px;height:32px;overflow:hidden;text-align:center;font-size:13px;color:#000;line-height:32px;"><span class="nc">19</span></div>
<div class="abs" style="left:0px;top:443px;width:42px;height:1px;background:#b2b2b2"></div>
<div class="abs" style="left:0px;top:477px;width:42px;height:1px;background:#ececec"></div>
<div class="abs" style="left:1px;top:477px;width:41px;height:32px;overflow:hidden;text-align:center;font-size:13px;color:#000;line-height:32px;"><span class="nc">20</span></div>
<div class="abs" style="left:0px;top:476px;width:42px;height:1px;background:#b2b2b2"></div>
<div class="abs" style="left:0px;top:510px;width:42px;height:1px;background:#ececec"></div>
<div class="abs" style="left:1px;top:510px;width:41px;height:16px;overflow:hidden;text-align:center;font-size:13px;color:#000;line-height:16px;"><span class="nc">21</span></div>
<div class="abs" style="left:0px;top:509px;width:42px;height:1px;background:#b2b2b2"></div>
<div class="abs" style="left:0px;top:527px;width:42px;height:1px;background:#ececec"></div>
<div class="abs" style="left:1px;top:527px;width:41px;height:16px;overflow:hidden;text-align:center;font-size:13px;color:#000;line-height:16px;"><span class="nc">22</span></div>
<div class="abs" style="left:0px;top:526px;width:42px;height:1px;background:#b2b2b2"></div>
<div class="abs" style="left:0px;top:544px;width:42px;height:1px;background:#ececec"></div>
<div class="abs" style="left:1px;top:544px;width:41px;height:16px;overflow:hidden;text-align:center;font-size:13px;color:#000;line-height:16px;"><span class="nc">23</span></div>
<div class="abs" style="left:0px;top:543px;width:42px;height:1px;background:#b2b2b2"></div>
<div class="abs" style="left:0px;top:561px;width:42px;height:1px;background:#ececec"></div>
<div class="abs" style="left:1px;top:561px;width:41px;height:16px;overflow:hidden;text-align:center;font-size:13px;color:#000;line-height:16px;"><span class="nc">24</span></div>
<div class="abs" style="left:0px;top:560px;width:42px;height:1px;background:#b2b2b2"></div>
<div class="abs" style="left:0px;top:578px;width:42px;height:1px;background:#ececec"></div>
<div class="abs" style="left:1px;top:578px;width:41px;height:16px;overflow:hidden;text-align:center;font-size:13px;color:#000;line-height:16px;"><span class="nc">25</span></div>
<div class="abs" style="left:0px;top:577px;width:42px;height:1px;background:#b2b2b2"></div>
<div class="abs" style="left:0px;top:595px;width:42px;height:1px;background:#ececec"></div>
<div class="abs" style="left:1px;top:595px;width:41px;height:16px;overflow:hidden;text-align:center;font-size:13px;color:#000;line-height:16px;"><span class="nc">26</span></div>
<div class="abs" style="left:0px;top:594px;width:42px;height:1px;background:#b2b2b2"></div>
<div class="abs" style="left:0px;top:612px;width:42px;height:1px;background:#ececec"></div>
<div class="abs" style="left:1px;top:612px;width:41px;height:32px;overflow:hidden;text-align:center;font-size:13px;color:#000;line-height:32px;"><span class="nc">27</span></div>
<div class="abs" style="left:0px;top:611px;width:42px;height:1px;background:#b2b2b2"></div>
<div class="abs" style="left:0px;top:645px;width:42px;height:1px;background:#ececec"></div>
<div class="abs" style="left:1px;top:645px;width:41px;height:4px;overflow:hidden;text-align:center;font-size:13px;color:#000;line-height:16px;"><span class="nc">28</span></div>
<div class="abs" style="left:0px;top:644px;width:42px;height:1px;background:#b2b2b2"></div>
<div class="abs" style="left:42px;top:18px;width:1px;height:631px;background:#b2b2b2"></div>
<div class="abs" style="left:43px;top:18px;width:1px;height:631px;background:#efefef"></div>
<div class="abs" style="left:0px;top:0px;width:1px;height:650px;background:#c2c2c2"></div>
<div class="abs" style="left:0px;top:0px;width:1873px;height:1px;background:#a3a3a3"></div>
<div class="abs" style="left:1873px;top:0px;width:14px;height:650px;background:#fff"></div>
<div class="abs" style="left:1876px;top:23px;width:8px;height:603px;background:#d9d9d9;border-radius:4px"></div>
<div class="abs" style="left:1876px;top:23px;width:8px;height:304px;background:#a6a6a6;border-radius:4px"></div>
<div class="abs" style="left:0px;top:649px;width:1887px;height:14px;background:#fff"></div>
<div class="abs" style="left:23px;top:653px;width:1827px;height:8px;background:#d9d9d9;border-radius:4px"></div>
<div class="abs" style="left:23px;top:653px;width:1360px;height:8px;background:#a6a6a6;border-radius:4px"></div>
<svg class="abs" style="left:1877px;top:9px" width="7" height="5"><path d="M0 4.5L3.5 0L7 4.5Z" fill="#c4c4c4"/></svg><svg class="abs" style="left:1877px;top:636px" width="7" height="5"><path d="M0 0H7L3.5 4.5Z" fill="#555"/></svg><svg class="abs" style="left:9px;top:654px" width="5" height="7"><path d="M4.5 0V7L0 3.5Z" fill="#c4c4c4"/></svg><svg class="abs" style="left:1860px;top:654px" width="5" height="7"><path d="M0 0V7L4.5 3.5Z" fill="#555"/></svg></div>
<div class="abs" style="left:0;top:1008px;width:1920px;height:32px;background:#f2f2f2;border-top:1px solid #cfcfcf"></div>
<svg class="abs" style="left:9px;top:1016px" width="16" height="14" viewBox="0 0 16 14"><path d="M8 1 L15 7.2 H13 V13 H9.6 V9 H6.4 V13 H3 V7.2 H1 Z" fill="#4a4a4a"/></svg>
<div class="t" style="left:36px;top:1016px;font-size:13px;color:#333;letter-spacing:-.17px">Начальная страница</div>
<div class="abs" style="left:175px;top:1009px;width:308px;height:31px;background:#fff;border-left:1px solid #cfcfcf;border-right:1px solid #cfcfcf"></div>
<div class="abs" style="left:179px;top:1036px;width:300px;height:2px;background:#0c9a4a"></div>
<div class="t" style="left:186px;top:1016px;font-size:13px;color:#333;letter-spacing:-.09px">Табула T00000082: Одноуровневая структура</div>
<svg class="abs" style="left:466px;top:1020px" width="9" height="9" viewBox="0 0 9 9"><path d="M1.3 1.3L7.7 7.7M7.7 1.3L1.3 7.7" stroke="#333" stroke-width="1.6"/></svg>
</body></html>
